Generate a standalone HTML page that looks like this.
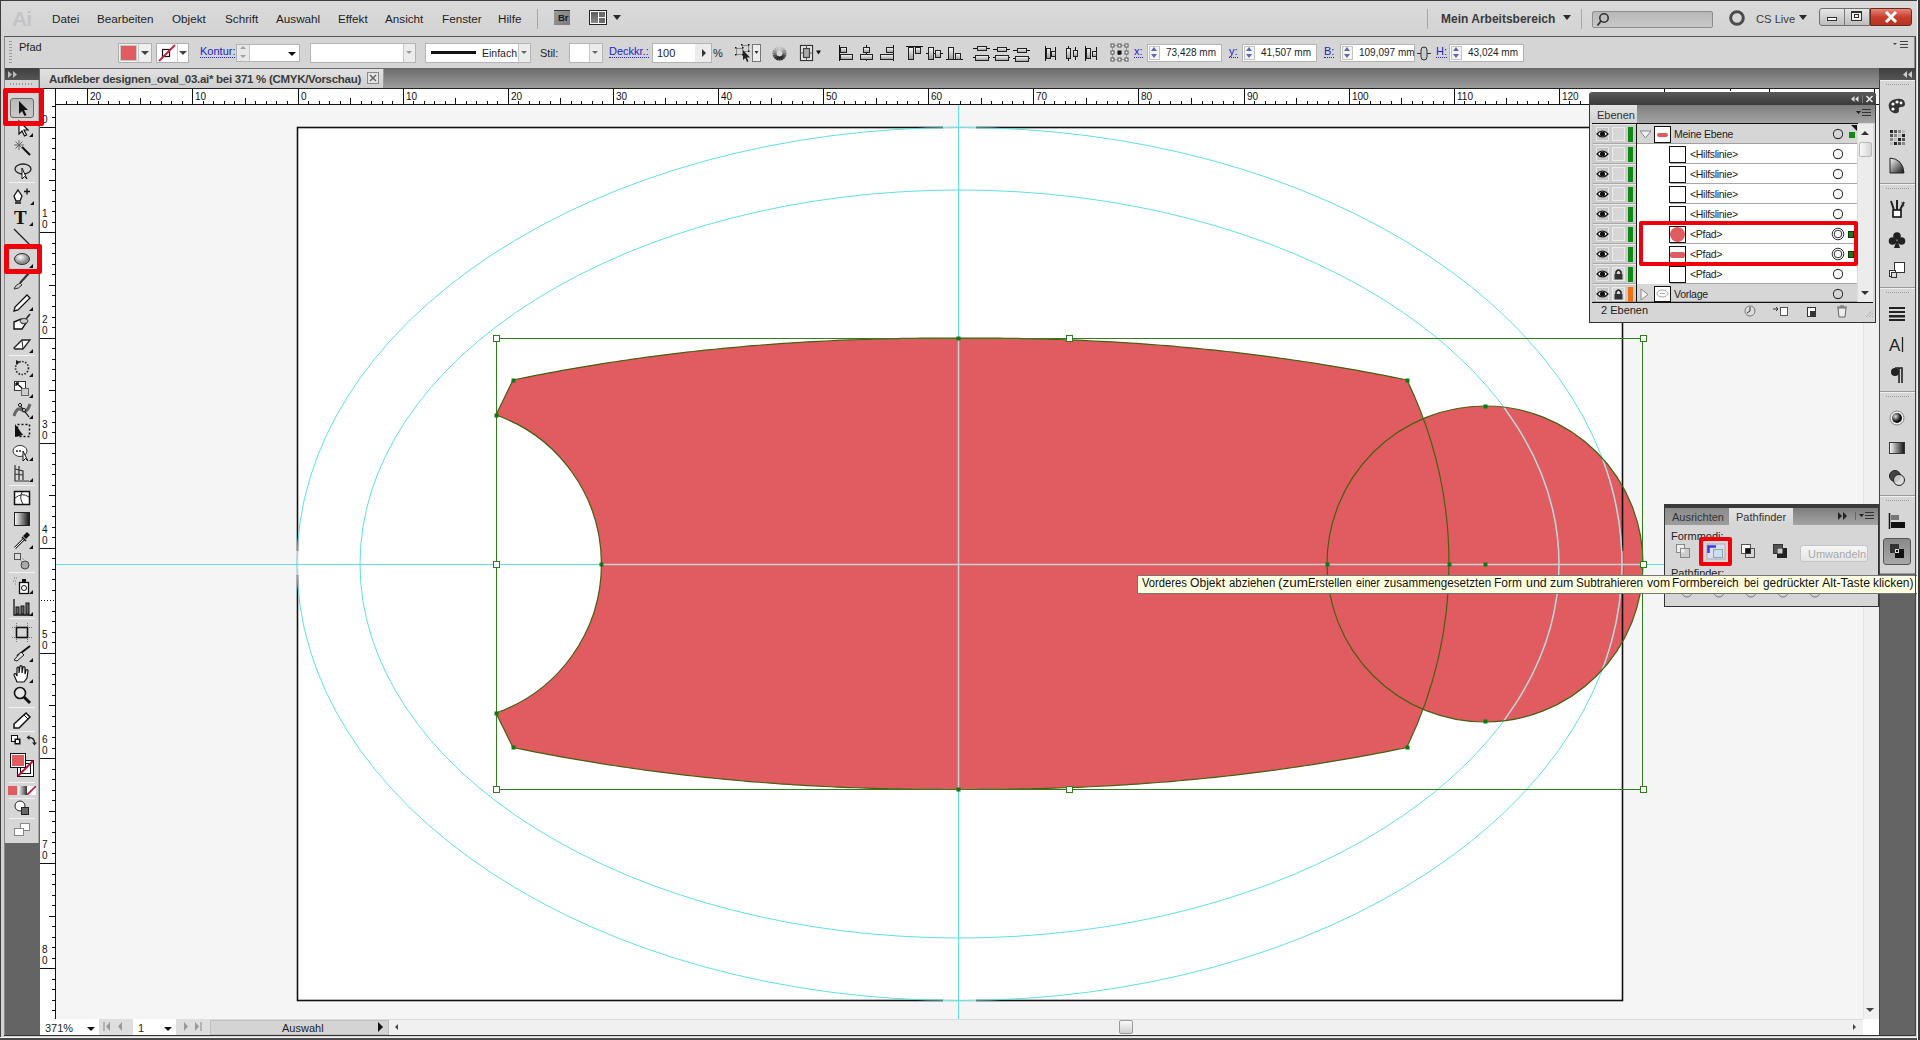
<!DOCTYPE html><html><head><meta charset="utf-8"><style>
*{box-sizing:border-box;margin:0;padding:0}
html,body{width:1920px;height:1040px;overflow:hidden;background:#d4d4d4;font-family:"Liberation Sans", sans-serif;}
.abs{position:absolute}
.t{position:absolute;white-space:nowrap;font-size:12px;color:#1e1e1e;line-height:14px}
</style></head><body>
<div class="abs" style="left:0;top:0;width:1920px;height:1040px;background:#d3d3d3;border-top:1px solid #3c3c3c;border-left:1px solid #3c3c3c"></div><div class="abs" style="left:1px;top:1px;width:1919px;height:35px;background:linear-gradient(#dadada,#d3d3d3)"></div><div class="t" style="left:12px;top:8px;font-size:21px;line-height:22px;font-weight:bold;color:#c4c4c4;letter-spacing:-1px">Ai</div><div class="t" style="left:52px;top:12px;font-size:11.7px">Datei</div><div class="t" style="left:97px;top:12px;font-size:11.7px">Bearbeiten</div><div class="t" style="left:172px;top:12px;font-size:11.7px">Objekt</div><div class="t" style="left:225px;top:12px;font-size:11.7px">Schrift</div><div class="t" style="left:276px;top:12px;font-size:11.7px">Auswahl</div><div class="t" style="left:338px;top:12px;font-size:11.7px">Effekt</div><div class="t" style="left:385px;top:12px;font-size:11.7px">Ansicht</div><div class="t" style="left:442px;top:12px;font-size:11.7px">Fenster</div><div class="t" style="left:498px;top:12px;font-size:11.7px">Hilfe</div><div class="abs" style="left:537px;top:9px;width:1px;height:20px;background:#a8a8a8"></div><div class="abs" style="left:554px;top:10px;width:16px;height:15px;background:linear-gradient(135deg,#9a9a9a,#7a7a7a);border-top:1px solid #333"></div><div class="t" style="left:558px;top:13px;font-size:9.5px;line-height:10px;color:#1a1a1a;font-weight:bold">Br</div><div class="abs" style="left:589px;top:10px;width:18px;height:15px;background:#fff;border:1px solid #222"></div><div class="abs" style="left:591px;top:12px;width:7px;height:11px;background:linear-gradient(#5a5a5a,#8a8a8a)"></div><div class="abs" style="left:599px;top:12px;width:6px;height:5px;background:#6a6a6a"></div><div class="abs" style="left:599px;top:18px;width:6px;height:5px;background:#6a6a6a"></div><div class="abs" style="left:613px;top:15px;width:0;height:0;border-left:4px solid transparent;border-right:4px solid transparent;border-top:5px solid #2a2a2a"></div><div class="abs" style="left:1427px;top:9px;width:1px;height:20px;background:#a8a8a8"></div><div class="t" style="left:1441px;top:12px;font-size:12px;font-weight:bold;color:#3a3a3a">Mein Arbeitsbereich</div><div class="abs" style="left:1563px;top:15px;width:0;height:0;border-left:4px solid transparent;border-right:4px solid transparent;border-top:5px solid #2a2a2a"></div><div class="abs" style="left:1581px;top:9px;width:1px;height:20px;background:#a8a8a8"></div><div class="abs" style="left:1592px;top:11px;width:121px;height:17px;background:linear-gradient(#b8b8b8,#c8c8c8);border:1px solid #8e8e8e;border-radius:2px"></div><svg class="abs" style="left:1596px;top:12px" width="14" height="15"><circle cx="8" cy="6" r="4.2" fill="none" stroke="#333" stroke-width="1.6"/><line x1="5" y1="9" x2="1.5" y2="13.5" stroke="#333" stroke-width="1.8"/></svg><svg class="abs" style="left:1728px;top:9px" width="18" height="18"><circle cx="9" cy="9" r="6.3" fill="none" stroke="#4a4a4a" stroke-width="3"/></svg><div class="t" style="left:1756px;top:12px;font-size:11.2px;color:#3a3a3a">CS Live</div><div class="abs" style="left:1799px;top:15px;width:0;height:0;border-left:4px solid transparent;border-right:4px solid transparent;border-top:5px solid #2a2a2a"></div><div class="abs" style="left:1819px;top:8px;width:51px;height:18px;background:linear-gradient(#e6e6e6,#bdbdbd);border:1px solid #6e6e6e;border-radius:3px 0 0 3px"></div><div class="abs" style="left:1844px;top:9px;width:1px;height:16px;background:#7a7a7a"></div><div class="abs" style="left:1827px;top:17px;width:10px;height:4px;border:1px solid #303030;background:#fff"></div><div class="abs" style="left:1851px;top:11px;width:11px;height:10px;border:1px solid #303030;border-top-width:2px;background:#eee"></div><div class="abs" style="left:1854px;top:14px;width:5px;height:4px;border:1px solid #303030"></div><div class="abs" style="left:1870px;top:8px;width:42px;height:18px;background:linear-gradient(#e8867a,#c6402f 50%,#b8331f);border:1px solid #6a2a20;border-radius:0 3px 3px 0"></div><svg class="abs" style="left:1884px;top:11px" width="14" height="12"><path d="M2 1 L12 11 M12 1 L2 11" stroke="#fff" stroke-width="3"/></svg><div class="abs" style="left:4px;top:36px;width:1911px;height:32px;background:#d5d5d5;border-top:1px solid #555;border-left:1px solid #8a8a8a;border-right:1px solid #8a8a8a"></div><div class="abs" style="left:9px;top:41px;width:3px;height:22px;background:repeating-linear-gradient(#9a9a9a 0 1px,transparent 1px 3px)"></div><div class="t" style="left:19px;top:40px;font-size:11px">Pfad</div><div class="abs" style="left:118px;top:43px;width:34px;height:20px;background:#efefef;border:1px solid #b0b0b0"></div><div class="abs" style="left:120px;top:45px;width:17px;height:16px;background:#e05c5e;border:1px solid #c9c9c9"></div><div class="abs" style="left:138px;top:44px;width:1px;height:18px;background:#c8c8c8"></div><div class="abs" style="left:141px;top:51px;width:0;height:0;border-left:4px solid transparent;border-right:4px solid transparent;border-top:4px solid #444"></div><div class="abs" style="left:156px;top:43px;width:33px;height:20px;background:#fff;border:1px solid #b0b0b0"></div><svg class="abs" style="left:157px;top:44px" width="20" height="18"><rect x="5.5" y="5.5" width="7" height="7" fill="none" stroke="#111" stroke-width="1.2"/><line x1="2" y1="17" x2="18" y2="1" stroke="#c02040" stroke-width="1.8"/></svg><div class="abs" style="left:177px;top:44px;width:1px;height:18px;background:#d0d0d0"></div><div class="abs" style="left:179px;top:51px;width:0;height:0;border-left:4px solid transparent;border-right:4px solid transparent;border-top:4px solid #444"></div><div class="t" style="left:200px;top:45px;font-size:11px;color:#2323c8;border-bottom:1px dotted #2323c8;line-height:12px">Kontur:</div><div class="abs" style="left:236px;top:44px;width:64px;height:18px;background:#fff;border:1px solid #b4b4b4"></div><div class="abs" style="left:237px;top:45px;width:13px;height:16px;background:#e8e8e8;border-right:1px solid #c8c8c8"></div><div class="abs" style="left:240px;top:46px;width:0;height:0;border-left:3px solid transparent;border-right:3px solid transparent;border-bottom:3px solid #a0a0a0"></div><div class="abs" style="left:240px;top:55px;width:0;height:0;border-left:3px solid transparent;border-right:3px solid transparent;border-top:3px solid #a0a0a0"></div><div class="abs" style="left:288px;top:52px;width:0;height:0;border-left:4px solid transparent;border-right:4px solid transparent;border-top:4px solid #111"></div><div class="abs" style="left:310px;top:43px;width:106px;height:20px;background:#fff;border:1px solid #b4b4b4"></div><div class="abs" style="left:403px;top:44px;width:12px;height:18px;background:#ececec;border-left:1px solid #c8c8c8"></div><div class="abs" style="left:406px;top:51px;width:0;height:0;border-left:3px solid transparent;border-right:3px solid transparent;border-top:3px solid #9a9a9a"></div><div class="abs" style="left:425px;top:43px;width:106px;height:20px;background:#fff;border:1px solid #b4b4b4"></div><div class="abs" style="left:431px;top:51px;width:45px;height:3px;background:#111"></div><div class="t" style="left:482px;top:46px;font-size:10.5px">Einfach</div><div class="abs" style="left:518px;top:44px;width:12px;height:18px;background:#ececec;border-left:1px solid #c8c8c8"></div><div class="abs" style="left:521px;top:51px;width:0;height:0;border-left:3px solid transparent;border-right:3px solid transparent;border-top:3px solid #666"></div><div class="t" style="left:540px;top:46px;font-size:11px">Stil:</div><div class="abs" style="left:569px;top:43px;width:34px;height:20px;background:#fff;border:1px solid #b4b4b4"></div><div class="abs" style="left:589px;top:44px;width:13px;height:18px;background:#ececec;border-left:1px solid #c8c8c8"></div><div class="abs" style="left:592px;top:51px;width:0;height:0;border-left:3px solid transparent;border-right:3px solid transparent;border-top:3px solid #666"></div><div class="t" style="left:609px;top:45px;font-size:11px;color:#2323c8;border-bottom:1px dotted #2323c8;line-height:12px">Deckkr.:</div><div class="abs" style="left:652px;top:43px;width:60px;height:20px;background:#fff;border:1px solid #b4b4b4"></div><div class="t" style="left:657px;top:46px;font-size:11px">100</div><div class="abs" style="left:695px;top:44px;width:16px;height:18px;background:#ececec"></div><div class="abs" style="left:702px;top:49px;width:0;height:0;border-top:4px solid transparent;border-bottom:4px solid transparent;border-left:4px solid #333"></div><div class="t" style="left:713px;top:46px;font-size:11px">%</div><svg class="abs" style="left:733px;top:43px" width="30" height="20"><rect x="3.5" y="5.5" width="6" height="6" fill="none" stroke="#888"/><rect x="9.5" y="2.5" width="6" height="6" fill="none" stroke="#888"/><g fill="#111"><rect x="2" y="4" width="1.5" height="1.5"/><rect x="9" y="4" width="1.5" height="1.5"/><rect x="2" y="11" width="1.5" height="1.5"/><rect x="9" y="11" width="1.5" height="1.5"/><rect x="8" y="1" width="1.5" height="1.5"/><rect x="15" y="1" width="1.5" height="1.5"/><rect x="15" y="7.5" width="1.5" height="1.5"/></g><path d="M10 7 L10 17 L12.3 15 L14 19 L15.5 18.3 L13.8 14.5 L17 14.5 Z" fill="#222"/><rect x="19.5" y="1.5" width="8" height="17" fill="#eee" stroke="#777"/><path d="M21.5 8 L25.5 8 L23.5 11 Z" fill="#333"/></svg><svg class="abs" style="left:771px;top:45px" width="17" height="17"><line x1="11.50" y1="8.50" x2="15.50" y2="8.50" stroke="rgb(115,115,115)" stroke-width="2.2"/><line x1="11.27" y1="9.65" x2="14.97" y2="11.18" stroke="rgb(82,82,82)" stroke-width="2.2"/><line x1="10.62" y1="10.62" x2="13.45" y2="13.45" stroke="rgb(54,54,54)" stroke-width="2.2"/><line x1="9.65" y1="11.27" x2="11.18" y2="14.97" stroke="rgb(36,36,36)" stroke-width="2.2"/><line x1="8.50" y1="11.50" x2="8.50" y2="15.50" stroke="rgb(30,30,30)" stroke-width="2.2"/><line x1="7.35" y1="11.27" x2="5.82" y2="14.97" stroke="rgb(36,36,36)" stroke-width="2.2"/><line x1="6.38" y1="10.62" x2="3.55" y2="13.45" stroke="rgb(54,54,54)" stroke-width="2.2"/><line x1="5.73" y1="9.65" x2="2.03" y2="11.18" stroke="rgb(82,82,82)" stroke-width="2.2"/><line x1="5.50" y1="8.50" x2="1.50" y2="8.50" stroke="rgb(114,114,114)" stroke-width="2.2"/><line x1="5.73" y1="7.35" x2="2.03" y2="5.82" stroke="rgb(147,147,147)" stroke-width="2.2"/><line x1="6.38" y1="6.38" x2="3.55" y2="3.55" stroke="rgb(175,175,175)" stroke-width="2.2"/><line x1="7.35" y1="5.73" x2="5.82" y2="2.03" stroke="rgb(193,193,193)" stroke-width="2.2"/><line x1="8.50" y1="5.50" x2="8.50" y2="1.50" stroke="rgb(200,200,200)" stroke-width="2.2"/><line x1="9.65" y1="5.73" x2="11.18" y2="2.03" stroke="rgb(193,193,193)" stroke-width="2.2"/><line x1="10.62" y1="6.38" x2="13.45" y2="3.55" stroke="rgb(175,175,175)" stroke-width="2.2"/><line x1="11.27" y1="7.35" x2="14.97" y2="5.82" stroke="rgb(147,147,147)" stroke-width="2.2"/></svg><svg class="abs" style="left:799px;top:44px" width="26" height="18"><rect x="1.5" y="1.5" width="12" height="15" fill="#f4f4f4" stroke="#333" stroke-width="1.2"/><path d="M1.5 9 L13.5 9 M7.5 1.5 L7.5 16.5" stroke="#555"/><rect x="4.5" y="4.5" width="6" height="9" fill="#aaa" stroke="#444" stroke-width="1.3"/><path d="M17 6.5 L22 6.5 L19.5 10.5 Z" fill="#111"/></svg><svg width="0" height="0" style="position:absolute"><defs><linearGradient id="ag" x1="0" y1="0" x2="0" y2="1"><stop offset="0" stop-color="#fafafa"/><stop offset="1" stop-color="#9a9a9a"/></linearGradient></defs></svg><svg class="abs" style="left:838px;top:44px" width="19" height="18"><line x1="1.5" y1="1" x2="1.5" y2="17" stroke="#111"/><rect x="2.5" y="3.5" width="6" height="5" fill="url(#ag)" stroke="#222"/><rect x="2.5" y="10.5" width="12" height="5" fill="url(#ag)" stroke="#222"/></svg><svg class="abs" style="left:858px;top:44px" width="19" height="18"><line x1="8.5" y1="1" x2="8.5" y2="17" stroke="#111"/><rect x="5.5" y="3.5" width="6" height="5" fill="url(#ag)" stroke="#222"/><rect x="2.5" y="10.5" width="12" height="5" fill="url(#ag)" stroke="#222"/></svg><svg class="abs" style="left:878px;top:44px" width="19" height="18"><line x1="15.5" y1="1" x2="15.5" y2="17" stroke="#111"/><rect x="8.5" y="3.5" width="7" height="5" fill="url(#ag)" stroke="#222"/><rect x="2.5" y="10.5" width="13" height="5" fill="url(#ag)" stroke="#222"/></svg><svg class="abs" style="left:905px;top:44px" width="19" height="18"><line x1="1" y1="2.5" x2="18" y2="2.5" stroke="#111"/><rect x="3.5" y="3.5" width="5" height="12" fill="url(#ag)" stroke="#222"/><rect x="10.5" y="3.5" width="5" height="6" fill="url(#ag)" stroke="#222"/></svg><svg class="abs" style="left:925px;top:44px" width="19" height="18"><line x1="1" y1="9.5" x2="18" y2="9.5" stroke="#111"/><rect x="3.5" y="3.5" width="5" height="12" fill="url(#ag)" stroke="#222"/><rect x="10.5" y="6.5" width="5" height="7" fill="url(#ag)" stroke="#222"/></svg><svg class="abs" style="left:945px;top:44px" width="19" height="18"><line x1="1" y1="15.5" x2="18" y2="15.5" stroke="#111"/><rect x="3.5" y="3.5" width="5" height="12" fill="url(#ag)" stroke="#222"/><rect x="10.5" y="9.5" width="5" height="6" fill="url(#ag)" stroke="#222"/></svg><svg class="abs" style="left:972px;top:44px" width="19" height="18"><line x1="1" y1="4.5" x2="18" y2="4.5" stroke="#111"/><line x1="1" y1="13.5" x2="18" y2="13.5" stroke="#111"/><rect x="5.5" y="2.5" width="9" height="4" fill="url(#ag)" stroke="#222"/><rect x="3.5" y="11.5" width="13" height="5" fill="url(#ag)" stroke="#222"/></svg><svg class="abs" style="left:992px;top:44px" width="19" height="18"><line x1="1" y1="5.5" x2="18" y2="5.5" stroke="#111"/><line x1="1" y1="13.5" x2="18" y2="13.5" stroke="#111"/><rect x="5.5" y="3.5" width="9" height="4" fill="url(#ag)" stroke="#222"/><rect x="3.5" y="11.5" width="13" height="5" fill="url(#ag)" stroke="#222"/></svg><svg class="abs" style="left:1012px;top:44px" width="19" height="18"><line x1="1" y1="6.5" x2="18" y2="6.5" stroke="#111"/><line x1="1" y1="14.5" x2="18" y2="14.5" stroke="#111"/><rect x="5.5" y="4.5" width="9" height="4" fill="url(#ag)" stroke="#222"/><rect x="3.5" y="12.5" width="13" height="5" fill="url(#ag)" stroke="#222"/></svg><svg class="abs" style="left:1043px;top:44px" width="19" height="18"><line x1="2.5" y1="2" x2="2.5" y2="17" stroke="#111"/><rect x="3.5" y="4.5" width="4" height="10" fill="url(#ag)" stroke="#222"/><line x1="12.5" y1="3" x2="12.5" y2="16" stroke="#111"/><rect x="8.5" y="7.5" width="4" height="5" fill="url(#ag)" stroke="#222"/></svg><svg class="abs" style="left:1063px;top:44px" width="19" height="18"><line x1="5.5" y1="2" x2="5.5" y2="17" stroke="#111"/><rect x="3.5" y="4.5" width="4" height="10" fill="url(#ag)" stroke="#222"/><line x1="12.5" y1="3" x2="12.5" y2="16" stroke="#111"/><rect x="10.5" y="6.5" width="4" height="6" fill="url(#ag)" stroke="#222"/></svg><svg class="abs" style="left:1083px;top:44px" width="19" height="18"><line x1="2.5" y1="2" x2="2.5" y2="17" stroke="#111"/><rect x="3.5" y="4.5" width="4" height="10" fill="url(#ag)" stroke="#222"/><line x1="13.5" y1="3" x2="13.5" y2="16" stroke="#111"/><rect x="9.5" y="7.5" width="4" height="5" fill="url(#ag)" stroke="#222"/></svg><svg class="abs" style="left:1110px;top:43px" width="20" height="20"><rect x="2.5" y="2.5" width="14" height="14" fill="none" stroke="#666" stroke-dasharray="1 1"/><path d="M8 9 L11 9 L11 11 L8 12 Z" fill="#111"/><rect x="1.0" y="1.0" width="3" height="3" fill="#fff" stroke="#555"/><rect x="8.0" y="1.0" width="3" height="3" fill="#fff" stroke="#555"/><rect x="15.0" y="1.0" width="3" height="3" fill="#fff" stroke="#555"/><rect x="1.0" y="8.0" width="3" height="3" fill="#fff" stroke="#555"/><rect x="7.5" y="7.5" width="4" height="4" fill="#111"/><rect x="15.0" y="8.0" width="3" height="3" fill="#fff" stroke="#555"/><rect x="1.0" y="15.0" width="3" height="3" fill="#fff" stroke="#555"/><rect x="8.0" y="15.0" width="3" height="3" fill="#fff" stroke="#555"/><rect x="15.0" y="15.0" width="3" height="3" fill="#fff" stroke="#555"/></svg><div class="t" style="left:1134px;top:45px;font-size:11px;color:#2323c8;border-bottom:1px dotted #2323c8;line-height:12px">x:</div><div class="abs" style="left:1147px;top:44px;width:75px;height:18px;background:#fff;border:1px solid #b4b4b4"></div><div class="abs" style="left:1149px;top:46px;width:11px;height:14px;border:1px solid #c4c4c4;background:#f4f4f4"></div><div class="abs" style="left:1151px;top:47px;width:0;height:0;border-left:3px solid transparent;border-right:3px solid transparent;border-bottom:4px solid #5a6ab0"></div><div class="abs" style="left:1151px;top:54px;width:0;height:0;border-left:3px solid transparent;border-right:3px solid transparent;border-top:4px solid #5a6ab0"></div><div class="t" style="left:1166px;top:46px;font-size:10px">73,428 mm</div><div class="t" style="left:1229px;top:45px;font-size:11px;color:#2323c8;border-bottom:1px dotted #2323c8;line-height:12px">y:</div><div class="abs" style="left:1242px;top:44px;width:75px;height:18px;background:#fff;border:1px solid #b4b4b4"></div><div class="abs" style="left:1244px;top:46px;width:11px;height:14px;border:1px solid #c4c4c4;background:#f4f4f4"></div><div class="abs" style="left:1246px;top:47px;width:0;height:0;border-left:3px solid transparent;border-right:3px solid transparent;border-bottom:4px solid #5a6ab0"></div><div class="abs" style="left:1246px;top:54px;width:0;height:0;border-left:3px solid transparent;border-right:3px solid transparent;border-top:4px solid #5a6ab0"></div><div class="t" style="left:1261px;top:46px;font-size:10px">41,507 mm</div><div class="t" style="left:1324px;top:45px;font-size:11px;color:#2323c8;border-bottom:1px dotted #2323c8;line-height:12px">B:</div><div class="abs" style="left:1340px;top:44px;width:75px;height:18px;background:#fff;border:1px solid #b4b4b4"></div><div class="abs" style="left:1342px;top:46px;width:11px;height:14px;border:1px solid #c4c4c4;background:#f4f4f4"></div><div class="abs" style="left:1344px;top:47px;width:0;height:0;border-left:3px solid transparent;border-right:3px solid transparent;border-bottom:4px solid #5a6ab0"></div><div class="abs" style="left:1344px;top:54px;width:0;height:0;border-left:3px solid transparent;border-right:3px solid transparent;border-top:4px solid #5a6ab0"></div><div class="t" style="left:1359px;top:46px;font-size:10px">109,097 mm</div><svg class="abs" style="left:1416px;top:44px" width="16" height="18"><line x1="1" y1="9.5" x2="15" y2="9.5" stroke="#333"/><rect x="5" y="3" width="6" height="13" rx="3" fill="#ccc" stroke="#333"/></svg><div class="t" style="left:1436px;top:45px;font-size:11px;color:#2323c8;border-bottom:1px dotted #2323c8;line-height:12px">H:</div><div class="abs" style="left:1449px;top:44px;width:75px;height:18px;background:#fff;border:1px solid #b4b4b4"></div><div class="abs" style="left:1451px;top:46px;width:11px;height:14px;border:1px solid #c4c4c4;background:#f4f4f4"></div><div class="abs" style="left:1453px;top:47px;width:0;height:0;border-left:3px solid transparent;border-right:3px solid transparent;border-bottom:4px solid #5a6ab0"></div><div class="abs" style="left:1453px;top:54px;width:0;height:0;border-left:3px solid transparent;border-right:3px solid transparent;border-top:4px solid #5a6ab0"></div><div class="t" style="left:1468px;top:46px;font-size:10px">43,024 mm</div><div class="abs" style="left:1900px;top:41px;width:8px;height:8px;background:repeating-linear-gradient(#444 0 1px,transparent 1px 3px)"></div><div class="abs" style="left:1893px;top:43px;width:0;height:0;border-left:2px solid transparent;border-right:2px solid transparent;border-top:2px solid #444"></div><div class="abs" style="left:40px;top:68px;width:1839px;height:20px;background:linear-gradient(#6a6a6a,#9c9c9c)"></div><div class="abs" style="left:40px;top:69px;width:344px;height:19px;background:linear-gradient(#e2e2e2,#cfcfcf);border-right:1px solid #9a9a9a"></div><div class="t" style="left:49px;top:72px;font-size:11.5px;font-weight:bold;color:#3c3c3c;letter-spacing:-0.28px">Aufkleber designen_oval_03.ai* bei 371 % (CMYK/Vorschau)</div><div class="abs" style="left:367px;top:72px;width:12px;height:12px;border:1px solid #8a8a8a;background:#e4e4e4"></div><svg class="abs" style="left:367px;top:72px" width="12" height="12"><path d="M3 3 L9 9 M9 3 L3 9" stroke="#666" stroke-width="1.5"/></svg><div class="abs" style="left:4px;top:68px;width:36px;height:968px;background:#646464;border-left:1px solid #8a8a8a"></div><div class="abs" style="left:5px;top:68px;width:34px;height:12px;background:linear-gradient(#3e3e3e,#555)"></div><svg class="abs" style="left:8px;top:71px" width="10" height="7"><path d="M0 0 L4 3.5 L0 7 Z M5 0 L9 3.5 L5 7 Z" fill="#bbb"/></svg><div class="abs" style="left:5px;top:80px;width:34px;height:763px;background:#d6d6d6;border-right:1px solid #a8a8a8"></div><div class="abs" style="left:10px;top:83px;width:24px;height:2px;background:repeating-linear-gradient(90deg,#9a9a9a 0 1px,transparent 1px 3px)"></div><div class="abs" style="left:10px;top:98px;width:24px;height:20px;border:1px solid #6a6a6a;border-radius:3px;background:linear-gradient(#b8b8b8,#cacaca)"></div><svg class="abs" style="left:11px;top:98px" width="22" height="20"><path d="M8 3 L8 16 L11 13 L13.5 18 L15.5 17 L13 12 L17 12 Z" fill="#111"/></svg><svg class="abs" style="left:11px;top:118px" width="22" height="20"><path d="M8 3 L8 16 L11 13 L13.5 18 L15.5 17 L13 12 L17 12 Z" fill="#fff" stroke="#111" stroke-width="1.2"/></svg><svg class="abs" style="left:29px;top:133px" width="4" height="4"><path d="M4 0 L4 4 L0 4 Z" fill="#111"/></svg><svg class="abs" style="left:11px;top:138px" width="22" height="20"><path d="M11 9 L19 17" stroke="#111" stroke-width="2"/><path d="M8 2 L8 12 M3 7 L13 7 M4.5 3.5 L11.5 10.5 M11.5 3.5 L4.5 10.5" stroke="#666" stroke-width="1"/></svg><svg class="abs" style="left:11px;top:160px" width="22" height="20"><ellipse cx="12" cy="9" rx="8" ry="5" fill="none" stroke="#222" stroke-width="1.3"/><path d="M11 8 L11 19 L13.5 16.5 L16 19 Z" fill="#fff" stroke="#111"/></svg><div class="abs" style="left:9px;top:182px;width:26px;height:1px;background:#b4b4b4;border-bottom:1px solid #f2f2f2"></div><svg class="abs" style="left:12px;top:186px" width="22" height="20"><path d="M6 4 L10 10 L8 15 L4 15 L2 10 Z" fill="#fff" stroke="#111" stroke-width="1.3"/><line x1="3" y1="17" x2="9" y2="17" stroke="#111" stroke-width="1.5"/><path d="M12 5.5 L18 5.5 M15 2.5 L15 8.5" stroke="#111" stroke-width="1.4"/></svg><svg class="abs" style="left:30px;top:201px" width="4" height="4"><path d="M4 0 L4 4 L0 4 Z" fill="#111"/></svg><svg class="abs" style="left:11px;top:207px" width="22" height="20"><text x="3" y="17" font-family="Liberation Serif" font-size="19" font-weight="bold" fill="#111">T</text></svg><svg class="abs" style="left:29px;top:222px" width="4" height="4"><path d="M4 0 L4 4 L0 4 Z" fill="#111"/></svg><svg class="abs" style="left:11px;top:227px" width="22" height="20"><line x1="3" y1="2" x2="19" y2="18" stroke="#222" stroke-width="1.3"/></svg><svg class="abs" style="left:11px;top:249px" width="22" height="20"><defs><radialGradient id="eg" cx="40%" cy="35%"><stop offset="0" stop-color="#fff"/><stop offset="1" stop-color="#8a8a8a"/></radialGradient></defs><ellipse cx="11" cy="10" rx="7.5" ry="5.5" fill="url(#eg)" stroke="#333"/></svg><svg class="abs" style="left:29px;top:264px" width="4" height="4"><path d="M4 0 L4 4 L0 4 Z" fill="#111"/></svg><svg class="abs" style="left:11px;top:271px" width="22" height="20"><path d="M18 2 L9 12" stroke="#333" stroke-width="2"/><path d="M9 12 Q4 14 3 18 Q8 18 11 14 Z" fill="#ccc" stroke="#333"/></svg><svg class="abs" style="left:11px;top:292px" width="22" height="20"><path d="M16 3 L19 6 L7 18 L3 19 L4 15 Z" fill="#fff" stroke="#111" stroke-width="1.3"/></svg><svg class="abs" style="left:29px;top:307px" width="4" height="4"><path d="M4 0 L4 4 L0 4 Z" fill="#111"/></svg><svg class="abs" style="left:11px;top:312px" width="22" height="20"><path d="M3 10 L10 7 L15 11 L11 17 L3 17 Z" fill="#fff" stroke="#111" stroke-width="1.4"/><path d="M19 2 L11 12" stroke="#333" stroke-width="1.8"/><ellipse cx="13" cy="9" rx="4" ry="2.5" fill="#ccc" stroke="#333"/></svg><svg class="abs" style="left:11px;top:334px" width="22" height="20"><path d="M3 14 L11 6 L19 6 L12 15 L4 15 Z" fill="#fff" stroke="#222" stroke-width="1.3"/><path d="M11 6 L12 15" stroke="#222"/></svg><svg class="abs" style="left:29px;top:349px" width="4" height="4"><path d="M4 0 L4 4 L0 4 Z" fill="#111"/></svg><div class="abs" style="left:9px;top:355px;width:26px;height:1px;background:#b4b4b4;border-bottom:1px solid #f2f2f2"></div><svg class="abs" style="left:11px;top:358px" width="22" height="20"><circle cx="11" cy="10" r="6.5" fill="none" stroke="#222" stroke-width="1.6" stroke-dasharray="1.5 1.5"/><path d="M5 2 L9 4 L5 7 Z" fill="#222"/></svg><svg class="abs" style="left:29px;top:373px" width="4" height="4"><path d="M4 0 L4 4 L0 4 Z" fill="#111"/></svg><svg class="abs" style="left:11px;top:379px" width="22" height="20"><rect x="3.5" y="2.5" width="11" height="9" fill="#fff" stroke="#333"/><rect x="10.5" y="9.5" width="7" height="7" fill="#ccc" stroke="#666"/><path d="M5 4 L11 9 M5 4 L8 4 M5 4 L5 7" stroke="#111" stroke-width="1.3"/></svg><svg class="abs" style="left:29px;top:394px" width="4" height="4"><path d="M4 0 L4 4 L0 4 Z" fill="#111"/></svg><svg class="abs" style="left:11px;top:400px" width="22" height="20"><path d="M3 16 Q6 6 11 10 Q16 14 19 4" fill="none" stroke="#666" stroke-width="3"/><path d="M8 4 L18 17" stroke="#111" stroke-width="1.2"/><circle cx="9" cy="5" r="1.5" fill="#fff" stroke="#111"/><circle cx="13" cy="10" r="1.5" fill="#fff" stroke="#111"/></svg><svg class="abs" style="left:29px;top:415px" width="4" height="4"><path d="M4 0 L4 4 L0 4 Z" fill="#111"/></svg><svg class="abs" style="left:11px;top:421px" width="22" height="20"><rect x="6.5" y="3.5" width="12" height="12" fill="none" stroke="#111" stroke-width="1.5" stroke-dasharray="2 2"/><path d="M4 3 L4 16 L12 14 Z" fill="#111"/></svg><svg class="abs" style="left:11px;top:442px" width="22" height="20"><ellipse cx="9" cy="9" rx="7" ry="5.5" fill="#fff" stroke="#333"/><circle cx="6" cy="9" r="1" fill="#222"/><circle cx="9" cy="9" r="1" fill="#222"/><path d="M12 9 L12 19 L14.5 16.5 L17 19 Z" fill="#fff" stroke="#111"/></svg><svg class="abs" style="left:29px;top:457px" width="4" height="4"><path d="M4 0 L4 4 L0 4 Z" fill="#111"/></svg><svg class="abs" style="left:11px;top:463px" width="22" height="20"><path d="M4 2 L4 18 L18 18 M4 6 L12 8 L12 17 M8 3 L8 17 M4 11 L12 12" fill="none" stroke="#333" stroke-width="1.2"/></svg><svg class="abs" style="left:29px;top:478px" width="4" height="4"><path d="M4 0 L4 4 L0 4 Z" fill="#111"/></svg><div class="abs" style="left:9px;top:485px;width:26px;height:1px;background:#b4b4b4;border-bottom:1px solid #f2f2f2"></div><svg class="abs" style="left:11px;top:488px" width="22" height="20"><rect x="3.5" y="3.5" width="15" height="13" fill="#fff" stroke="#111" stroke-width="1.5"/><path d="M4 10 Q11 4 18 9 M11 4 Q8 10 12 16" fill="none" stroke="#333"/></svg><svg class="abs" style="left:11px;top:509px" width="22" height="20"><defs><linearGradient id="gg"><stop offset="0" stop-color="#fff"/><stop offset="1" stop-color="#111"/></linearGradient></defs><rect x="3.5" y="3.5" width="15" height="13" fill="url(#gg)" stroke="#222"/></svg><svg class="abs" style="left:11px;top:530px" width="22" height="20"><path d="M4 18 L13 9" stroke="#333" stroke-width="2.5"/><path d="M4 18 L13 9" stroke="#fff" stroke-width="1"/><path d="M12 6 L16 2 L19 5 L15 9 Z" fill="#111"/><path d="M11 7 L15 11" stroke="#111" stroke-width="1.5"/></svg><svg class="abs" style="left:29px;top:545px" width="4" height="4"><path d="M4 0 L4 4 L0 4 Z" fill="#111"/></svg><svg class="abs" style="left:11px;top:551px" width="22" height="20"><rect x="3.5" y="2.5" width="6" height="6" fill="#ddd" stroke="#555"/><circle cx="14" cy="14" r="4" fill="#aaa" stroke="#444"/><path d="M9 9 L11 11 M11 7 L13 9" stroke="#888" stroke-dasharray="1 1"/></svg><div class="abs" style="left:9px;top:572px;width:26px;height:1px;background:#b4b4b4;border-bottom:1px solid #f2f2f2"></div><svg class="abs" style="left:11px;top:575px" width="22" height="20"><rect x="8.5" y="7.5" width="9" height="11" fill="#fff" stroke="#111" stroke-width="1.3"/><circle cx="13" cy="13" r="2.5" fill="none" stroke="#111"/><rect x="11" y="4" width="4" height="3" fill="#111"/><path d="M3 3 L6 3 M2 6 L6 6 M4 9 L6 9" stroke="#777" stroke-dasharray="1 1"/></svg><svg class="abs" style="left:29px;top:590px" width="4" height="4"><path d="M4 0 L4 4 L0 4 Z" fill="#111"/></svg><svg class="abs" style="left:11px;top:597px" width="22" height="20"><path d="M3 2 L3 18 L19 18" stroke="#111" fill="none" stroke-width="1.3"/><rect x="5" y="10" width="3" height="7" fill="#666" stroke="#111"/><rect x="10" y="9" width="3" height="8" fill="#666" stroke="#111"/><rect x="15" y="6" width="3" height="11" fill="#666" stroke="#111"/></svg><svg class="abs" style="left:29px;top:612px" width="4" height="4"><path d="M4 0 L4 4 L0 4 Z" fill="#111"/></svg><div class="abs" style="left:9px;top:618px;width:26px;height:1px;background:#b4b4b4;border-bottom:1px solid #f2f2f2"></div><svg class="abs" style="left:11px;top:622px" width="22" height="20"><rect x="5.5" y="5.5" width="11" height="10" fill="none" stroke="#111" stroke-width="1.6"/><path d="M1 5.5 L4 5.5 M18 5.5 L21 5.5 M1 15.5 L4 15.5 M18 15.5 L21 15.5 M5.5 1 L5.5 4 M16.5 1 L16.5 4 M5.5 17 L5.5 20 M16.5 17 L16.5 20" stroke="#777" stroke-dasharray="1 1"/></svg><svg class="abs" style="left:11px;top:643px" width="22" height="20"><path d="M19 3 L6 13" stroke="#111" stroke-width="2"/><path d="M10 9 L3 17 L6 18 L13 12 Z" fill="#ddd" stroke="#222"/></svg><svg class="abs" style="left:29px;top:658px" width="4" height="4"><path d="M4 0 L4 4 L0 4 Z" fill="#111"/></svg><svg class="abs" style="left:11px;top:664px" width="22" height="20"><path d="M6 18 L3 11 Q3 9 5 10 L6 12 L6 4 Q7 2 8 4 L8 9 L9 2 Q10.5 1 11 3 L11 9 L12 3 Q13.5 2 14 4 L14 10 L15 6 Q17 5 17 7 L16 14 L13 18 Z" fill="#fff" stroke="#111" stroke-width="1.2"/></svg><svg class="abs" style="left:29px;top:679px" width="4" height="4"><path d="M4 0 L4 4 L0 4 Z" fill="#111"/></svg><svg class="abs" style="left:11px;top:685px" width="22" height="20"><circle cx="9" cy="8" r="5.5" fill="#e8e8e8" stroke="#111" stroke-width="1.6"/><path d="M13 12 L19 18" stroke="#111" stroke-width="3"/></svg><div class="abs" style="left:9px;top:707px;width:26px;height:1px;background:#b4b4b4;border-bottom:1px solid #f2f2f2"></div><svg class="abs" style="left:11px;top:710px" width="22" height="20"><path d="M15 3 L19 7 L8 18 L3 18 L3 14 Z" fill="#fff" stroke="#111" stroke-width="1.5"/><path d="M13 5 L17 9" stroke="#111"/></svg><div class="abs" style="left:9px;top:731px;width:26px;height:1px;background:#b4b4b4;border-bottom:1px solid #f2f2f2"></div><svg class="abs" style="left:10px;top:734px" width="28" height="14"><rect x="1.5" y="1.5" width="6" height="6" fill="#fff" stroke="#111"/><rect x="4.5" y="4.5" width="6" height="6" fill="#111"/><rect x="6" y="6" width="3" height="3" fill="#fff"/><path d="M19 3.5 Q24.5 3.5 24.5 9" fill="none" stroke="#222" stroke-width="1.3"/><path d="M16.5 3.5 L19.5 1 L19.5 6 Z M24.5 11.5 L22 8.5 L27 8.5 Z" fill="#222"/></svg><div class="abs" style="left:17px;top:760px;width:17px;height:17px;background:#fff;border:1.5px solid #111"></div><div class="abs" style="left:20px;top:763px;width:11px;height:11px;border:1px solid #111"></div><svg class="abs" style="left:17px;top:760px" width="17" height="17"><line x1="1" y1="16" x2="16" y2="1" stroke="#c0143c" stroke-width="2"/></svg><div class="abs" style="left:10px;top:753px;width:16px;height:15px;background:#e05c5e;border:1.5px solid #111;box-shadow:0 0 0 1px #fff inset"></div><div class="abs" style="left:9px;top:782px;width:26px;height:1px;background:#b4b4b4;border-bottom:1px solid #f2f2f2"></div><div class="abs" style="left:8px;top:786px;width:9px;height:9px;background:#e05c5e"></div><div class="abs" style="left:18px;top:786px;width:9px;height:9px;background:linear-gradient(90deg,#fff,#333)"></div><svg class="abs" style="left:27px;top:786px" width="9" height="9"><rect width="9" height="9" fill="#fff"/><line x1="0" y1="9" x2="9" y2="0" stroke="#c0143c" stroke-width="1.6"/></svg><div class="abs" style="left:9px;top:798px;width:26px;height:1px;background:#b4b4b4;border-bottom:1px solid #f2f2f2"></div><svg class="abs" style="left:11px;top:798px" width="22" height="20"><circle cx="9" cy="8" r="5" fill="#fff" stroke="#222"/><rect x="10.5" y="9.5" width="7" height="7" fill="#666" stroke="#222"/></svg><div class="abs" style="left:9px;top:818px;width:26px;height:1px;background:#b4b4b4;border-bottom:1px solid #f2f2f2"></div><svg class="abs" style="left:11px;top:820px" width="22" height="20"><rect x="9.5" y="3.5" width="9" height="7" fill="#fff" stroke="#888"/><rect x="3.5" y="8.5" width="9" height="7" fill="#fff" stroke="#888"/></svg><div class="abs" style="left:40px;top:88px;width:1839px;height:17px;background:#fff;border-top:1px solid #222;border-bottom:1px solid #111"></div><div class="abs" style="left:40px;top:104px;width:16px;height:915px;background:#fff;border-right:1px solid #111"></div><div class="abs" style="left:55px;top:88px;width:1px;height:17px;background:#111"></div><svg class="abs" style="left:0;top:0" width="1920" height="1040"><g stroke="#111" stroke-width="1" shape-rendering="crispEdges"><line x1="66.5" y1="101" x2="66.5" y2="104"/><line x1="77.5" y1="101" x2="77.5" y2="104"/><line x1="87.5" y1="89" x2="87.5" y2="104"/><line x1="98.5" y1="101" x2="98.5" y2="104"/><line x1="108.5" y1="101" x2="108.5" y2="104"/><line x1="119.5" y1="101" x2="119.5" y2="104"/><line x1="129.5" y1="101" x2="129.5" y2="104"/><line x1="140.5" y1="98" x2="140.5" y2="104"/><line x1="150.5" y1="101" x2="150.5" y2="104"/><line x1="161.5" y1="101" x2="161.5" y2="104"/><line x1="171.5" y1="101" x2="171.5" y2="104"/><line x1="182.5" y1="101" x2="182.5" y2="104"/><line x1="192.5" y1="89" x2="192.5" y2="104"/><line x1="203.5" y1="101" x2="203.5" y2="104"/><line x1="213.5" y1="101" x2="213.5" y2="104"/><line x1="224.5" y1="101" x2="224.5" y2="104"/><line x1="234.5" y1="101" x2="234.5" y2="104"/><line x1="245.5" y1="98" x2="245.5" y2="104"/><line x1="255.5" y1="101" x2="255.5" y2="104"/><line x1="266.5" y1="101" x2="266.5" y2="104"/><line x1="276.5" y1="101" x2="276.5" y2="104"/><line x1="287.5" y1="101" x2="287.5" y2="104"/><line x1="298.5" y1="89" x2="298.5" y2="104"/><line x1="308.5" y1="101" x2="308.5" y2="104"/><line x1="319.5" y1="101" x2="319.5" y2="104"/><line x1="329.5" y1="101" x2="329.5" y2="104"/><line x1="340.5" y1="101" x2="340.5" y2="104"/><line x1="350.5" y1="98" x2="350.5" y2="104"/><line x1="361.5" y1="101" x2="361.5" y2="104"/><line x1="371.5" y1="101" x2="371.5" y2="104"/><line x1="382.5" y1="101" x2="382.5" y2="104"/><line x1="392.5" y1="101" x2="392.5" y2="104"/><line x1="403.5" y1="89" x2="403.5" y2="104"/><line x1="413.5" y1="101" x2="413.5" y2="104"/><line x1="424.5" y1="101" x2="424.5" y2="104"/><line x1="434.5" y1="101" x2="434.5" y2="104"/><line x1="445.5" y1="101" x2="445.5" y2="104"/><line x1="455.5" y1="98" x2="455.5" y2="104"/><line x1="466.5" y1="101" x2="466.5" y2="104"/><line x1="476.5" y1="101" x2="476.5" y2="104"/><line x1="487.5" y1="101" x2="487.5" y2="104"/><line x1="497.5" y1="101" x2="497.5" y2="104"/><line x1="508.5" y1="89" x2="508.5" y2="104"/><line x1="518.5" y1="101" x2="518.5" y2="104"/><line x1="529.5" y1="101" x2="529.5" y2="104"/><line x1="539.5" y1="101" x2="539.5" y2="104"/><line x1="550.5" y1="101" x2="550.5" y2="104"/><line x1="560.5" y1="98" x2="560.5" y2="104"/><line x1="571.5" y1="101" x2="571.5" y2="104"/><line x1="581.5" y1="101" x2="581.5" y2="104"/><line x1="592.5" y1="101" x2="592.5" y2="104"/><line x1="602.5" y1="101" x2="602.5" y2="104"/><line x1="613.5" y1="89" x2="613.5" y2="104"/><line x1="623.5" y1="101" x2="623.5" y2="104"/><line x1="634.5" y1="101" x2="634.5" y2="104"/><line x1="644.5" y1="101" x2="644.5" y2="104"/><line x1="655.5" y1="101" x2="655.5" y2="104"/><line x1="665.5" y1="98" x2="665.5" y2="104"/><line x1="676.5" y1="101" x2="676.5" y2="104"/><line x1="686.5" y1="101" x2="686.5" y2="104"/><line x1="697.5" y1="101" x2="697.5" y2="104"/><line x1="707.5" y1="101" x2="707.5" y2="104"/><line x1="718.5" y1="89" x2="718.5" y2="104"/><line x1="728.5" y1="101" x2="728.5" y2="104"/><line x1="739.5" y1="101" x2="739.5" y2="104"/><line x1="750.5" y1="101" x2="750.5" y2="104"/><line x1="760.5" y1="101" x2="760.5" y2="104"/><line x1="771.5" y1="98" x2="771.5" y2="104"/><line x1="781.5" y1="101" x2="781.5" y2="104"/><line x1="792.5" y1="101" x2="792.5" y2="104"/><line x1="802.5" y1="101" x2="802.5" y2="104"/><line x1="813.5" y1="101" x2="813.5" y2="104"/><line x1="823.5" y1="89" x2="823.5" y2="104"/><line x1="834.5" y1="101" x2="834.5" y2="104"/><line x1="844.5" y1="101" x2="844.5" y2="104"/><line x1="855.5" y1="101" x2="855.5" y2="104"/><line x1="865.5" y1="101" x2="865.5" y2="104"/><line x1="876.5" y1="98" x2="876.5" y2="104"/><line x1="886.5" y1="101" x2="886.5" y2="104"/><line x1="897.5" y1="101" x2="897.5" y2="104"/><line x1="907.5" y1="101" x2="907.5" y2="104"/><line x1="918.5" y1="101" x2="918.5" y2="104"/><line x1="928.5" y1="89" x2="928.5" y2="104"/><line x1="939.5" y1="101" x2="939.5" y2="104"/><line x1="949.5" y1="101" x2="949.5" y2="104"/><line x1="960.5" y1="101" x2="960.5" y2="104"/><line x1="970.5" y1="101" x2="970.5" y2="104"/><line x1="981.5" y1="98" x2="981.5" y2="104"/><line x1="991.5" y1="101" x2="991.5" y2="104"/><line x1="1002.5" y1="101" x2="1002.5" y2="104"/><line x1="1012.5" y1="101" x2="1012.5" y2="104"/><line x1="1023.5" y1="101" x2="1023.5" y2="104"/><line x1="1033.5" y1="89" x2="1033.5" y2="104"/><line x1="1044.5" y1="101" x2="1044.5" y2="104"/><line x1="1054.5" y1="101" x2="1054.5" y2="104"/><line x1="1065.5" y1="101" x2="1065.5" y2="104"/><line x1="1075.5" y1="101" x2="1075.5" y2="104"/><line x1="1086.5" y1="98" x2="1086.5" y2="104"/><line x1="1096.5" y1="101" x2="1096.5" y2="104"/><line x1="1107.5" y1="101" x2="1107.5" y2="104"/><line x1="1117.5" y1="101" x2="1117.5" y2="104"/><line x1="1128.5" y1="101" x2="1128.5" y2="104"/><line x1="1138.5" y1="89" x2="1138.5" y2="104"/><line x1="1149.5" y1="101" x2="1149.5" y2="104"/><line x1="1159.5" y1="101" x2="1159.5" y2="104"/><line x1="1170.5" y1="101" x2="1170.5" y2="104"/><line x1="1181.5" y1="101" x2="1181.5" y2="104"/><line x1="1191.5" y1="98" x2="1191.5" y2="104"/><line x1="1202.5" y1="101" x2="1202.5" y2="104"/><line x1="1212.5" y1="101" x2="1212.5" y2="104"/><line x1="1223.5" y1="101" x2="1223.5" y2="104"/><line x1="1233.5" y1="101" x2="1233.5" y2="104"/><line x1="1244.5" y1="89" x2="1244.5" y2="104"/><line x1="1254.5" y1="101" x2="1254.5" y2="104"/><line x1="1265.5" y1="101" x2="1265.5" y2="104"/><line x1="1275.5" y1="101" x2="1275.5" y2="104"/><line x1="1286.5" y1="101" x2="1286.5" y2="104"/><line x1="1296.5" y1="98" x2="1296.5" y2="104"/><line x1="1307.5" y1="101" x2="1307.5" y2="104"/><line x1="1317.5" y1="101" x2="1317.5" y2="104"/><line x1="1328.5" y1="101" x2="1328.5" y2="104"/><line x1="1338.5" y1="101" x2="1338.5" y2="104"/><line x1="1349.5" y1="89" x2="1349.5" y2="104"/><line x1="1359.5" y1="101" x2="1359.5" y2="104"/><line x1="1370.5" y1="101" x2="1370.5" y2="104"/><line x1="1380.5" y1="101" x2="1380.5" y2="104"/><line x1="1391.5" y1="101" x2="1391.5" y2="104"/><line x1="1401.5" y1="98" x2="1401.5" y2="104"/><line x1="1412.5" y1="101" x2="1412.5" y2="104"/><line x1="1422.5" y1="101" x2="1422.5" y2="104"/><line x1="1433.5" y1="101" x2="1433.5" y2="104"/><line x1="1443.5" y1="101" x2="1443.5" y2="104"/><line x1="1454.5" y1="89" x2="1454.5" y2="104"/><line x1="1464.5" y1="101" x2="1464.5" y2="104"/><line x1="1475.5" y1="101" x2="1475.5" y2="104"/><line x1="1485.5" y1="101" x2="1485.5" y2="104"/><line x1="1496.5" y1="101" x2="1496.5" y2="104"/><line x1="1506.5" y1="98" x2="1506.5" y2="104"/><line x1="1517.5" y1="101" x2="1517.5" y2="104"/><line x1="1527.5" y1="101" x2="1527.5" y2="104"/><line x1="1538.5" y1="101" x2="1538.5" y2="104"/><line x1="1548.5" y1="101" x2="1548.5" y2="104"/><line x1="1559.5" y1="89" x2="1559.5" y2="104"/><line x1="1569.5" y1="101" x2="1569.5" y2="104"/><line x1="1580.5" y1="101" x2="1580.5" y2="104"/><line x1="1590.5" y1="101" x2="1590.5" y2="104"/><line x1="1601.5" y1="101" x2="1601.5" y2="104"/><line x1="1612.5" y1="98" x2="1612.5" y2="104"/><line x1="1622.5" y1="101" x2="1622.5" y2="104"/><line x1="1633.5" y1="101" x2="1633.5" y2="104"/><line x1="1643.5" y1="101" x2="1643.5" y2="104"/><line x1="1654.5" y1="101" x2="1654.5" y2="104"/><line x1="1664.5" y1="89" x2="1664.5" y2="104"/><line x1="1675.5" y1="101" x2="1675.5" y2="104"/><line x1="1685.5" y1="101" x2="1685.5" y2="104"/><line x1="1696.5" y1="101" x2="1696.5" y2="104"/><line x1="1706.5" y1="101" x2="1706.5" y2="104"/><line x1="1717.5" y1="98" x2="1717.5" y2="104"/><line x1="1727.5" y1="101" x2="1727.5" y2="104"/><line x1="1738.5" y1="101" x2="1738.5" y2="104"/><line x1="1748.5" y1="101" x2="1748.5" y2="104"/><line x1="1759.5" y1="101" x2="1759.5" y2="104"/><line x1="1769.5" y1="89" x2="1769.5" y2="104"/><line x1="1780.5" y1="101" x2="1780.5" y2="104"/><line x1="1790.5" y1="101" x2="1790.5" y2="104"/><line x1="1801.5" y1="101" x2="1801.5" y2="104"/><line x1="1811.5" y1="101" x2="1811.5" y2="104"/><line x1="1822.5" y1="98" x2="1822.5" y2="104"/><line x1="1832.5" y1="101" x2="1832.5" y2="104"/><line x1="1843.5" y1="101" x2="1843.5" y2="104"/><line x1="1853.5" y1="101" x2="1853.5" y2="104"/><line x1="1864.5" y1="101" x2="1864.5" y2="104"/><line x1="1874.5" y1="89" x2="1874.5" y2="104"/><line x1="52" y1="106.5" x2="55" y2="106.5"/><line x1="52" y1="117.5" x2="55" y2="117.5"/><line x1="40" y1="127.5" x2="55" y2="127.5"/><line x1="52" y1="138.5" x2="55" y2="138.5"/><line x1="52" y1="148.5" x2="55" y2="148.5"/><line x1="52" y1="159.5" x2="55" y2="159.5"/><line x1="52" y1="169.5" x2="55" y2="169.5"/><line x1="49" y1="180.5" x2="55" y2="180.5"/><line x1="52" y1="190.5" x2="55" y2="190.5"/><line x1="52" y1="201.5" x2="55" y2="201.5"/><line x1="52" y1="211.5" x2="55" y2="211.5"/><line x1="52" y1="222.5" x2="55" y2="222.5"/><line x1="40" y1="232.5" x2="55" y2="232.5"/><line x1="52" y1="243.5" x2="55" y2="243.5"/><line x1="52" y1="253.5" x2="55" y2="253.5"/><line x1="52" y1="264.5" x2="55" y2="264.5"/><line x1="52" y1="274.5" x2="55" y2="274.5"/><line x1="49" y1="285.5" x2="55" y2="285.5"/><line x1="52" y1="295.5" x2="55" y2="295.5"/><line x1="52" y1="306.5" x2="55" y2="306.5"/><line x1="52" y1="317.5" x2="55" y2="317.5"/><line x1="52" y1="327.5" x2="55" y2="327.5"/><line x1="40" y1="338.5" x2="55" y2="338.5"/><line x1="52" y1="348.5" x2="55" y2="348.5"/><line x1="52" y1="359.5" x2="55" y2="359.5"/><line x1="52" y1="369.5" x2="55" y2="369.5"/><line x1="52" y1="380.5" x2="55" y2="380.5"/><line x1="49" y1="390.5" x2="55" y2="390.5"/><line x1="52" y1="401.5" x2="55" y2="401.5"/><line x1="52" y1="411.5" x2="55" y2="411.5"/><line x1="52" y1="422.5" x2="55" y2="422.5"/><line x1="52" y1="432.5" x2="55" y2="432.5"/><line x1="40" y1="443.5" x2="55" y2="443.5"/><line x1="52" y1="453.5" x2="55" y2="453.5"/><line x1="52" y1="464.5" x2="55" y2="464.5"/><line x1="52" y1="474.5" x2="55" y2="474.5"/><line x1="52" y1="485.5" x2="55" y2="485.5"/><line x1="49" y1="495.5" x2="55" y2="495.5"/><line x1="52" y1="506.5" x2="55" y2="506.5"/><line x1="52" y1="516.5" x2="55" y2="516.5"/><line x1="52" y1="527.5" x2="55" y2="527.5"/><line x1="52" y1="537.5" x2="55" y2="537.5"/><line x1="40" y1="548.5" x2="55" y2="548.5"/><line x1="52" y1="558.5" x2="55" y2="558.5"/><line x1="52" y1="569.5" x2="55" y2="569.5"/><line x1="52" y1="579.5" x2="55" y2="579.5"/><line x1="52" y1="590.5" x2="55" y2="590.5"/><line x1="52" y1="611.5" x2="55" y2="611.5"/><line x1="52" y1="621.5" x2="55" y2="621.5"/><line x1="52" y1="632.5" x2="55" y2="632.5"/><line x1="52" y1="642.5" x2="55" y2="642.5"/><line x1="40" y1="653.5" x2="55" y2="653.5"/><line x1="52" y1="663.5" x2="55" y2="663.5"/><line x1="52" y1="674.5" x2="55" y2="674.5"/><line x1="52" y1="684.5" x2="55" y2="684.5"/><line x1="52" y1="695.5" x2="55" y2="695.5"/><line x1="49" y1="705.5" x2="55" y2="705.5"/><line x1="52" y1="716.5" x2="55" y2="716.5"/><line x1="52" y1="726.5" x2="55" y2="726.5"/><line x1="52" y1="737.5" x2="55" y2="737.5"/><line x1="52" y1="748.5" x2="55" y2="748.5"/><line x1="40" y1="758.5" x2="55" y2="758.5"/><line x1="52" y1="769.5" x2="55" y2="769.5"/><line x1="52" y1="779.5" x2="55" y2="779.5"/><line x1="52" y1="790.5" x2="55" y2="790.5"/><line x1="52" y1="800.5" x2="55" y2="800.5"/><line x1="49" y1="811.5" x2="55" y2="811.5"/><line x1="52" y1="821.5" x2="55" y2="821.5"/><line x1="52" y1="832.5" x2="55" y2="832.5"/><line x1="52" y1="842.5" x2="55" y2="842.5"/><line x1="52" y1="853.5" x2="55" y2="853.5"/><line x1="40" y1="863.5" x2="55" y2="863.5"/><line x1="52" y1="874.5" x2="55" y2="874.5"/><line x1="52" y1="884.5" x2="55" y2="884.5"/><line x1="52" y1="895.5" x2="55" y2="895.5"/><line x1="52" y1="905.5" x2="55" y2="905.5"/><line x1="49" y1="916.5" x2="55" y2="916.5"/><line x1="52" y1="926.5" x2="55" y2="926.5"/><line x1="52" y1="937.5" x2="55" y2="937.5"/><line x1="52" y1="947.5" x2="55" y2="947.5"/><line x1="52" y1="958.5" x2="55" y2="958.5"/><line x1="40" y1="968.5" x2="55" y2="968.5"/><line x1="52" y1="979.5" x2="55" y2="979.5"/><line x1="52" y1="989.5" x2="55" y2="989.5"/><line x1="52" y1="1000.5" x2="55" y2="1000.5"/><line x1="52" y1="1010.5" x2="55" y2="1010.5"/></g><g font-family="Liberation Sans" font-size="10" fill="#111"><text x="90" y="100">20</text><text x="195" y="100">10</text><text x="301" y="100">0</text><text x="406" y="100">10</text><text x="511" y="100">20</text><text x="616" y="100">30</text><text x="721" y="100">40</text><text x="826" y="100">50</text><text x="931" y="100">60</text><text x="1036" y="100">70</text><text x="1141" y="100">80</text><text x="1247" y="100">90</text><text x="1352" y="100">100</text><text x="1457" y="100">110</text><text x="1562" y="100">120</text><text x="1667" y="100">130</text><text x="1772" y="100">140</text><text x="42" y="123">0</text><text x="42" y="217">1</text><text x="42" y="228">0</text><text x="42" y="323">2</text><text x="42" y="334">0</text><text x="42" y="428">3</text><text x="42" y="439">0</text><text x="42" y="533">4</text><text x="42" y="544">0</text><text x="42" y="638">5</text><text x="42" y="649">0</text><text x="42" y="743">6</text><text x="42" y="754">0</text><text x="42" y="848">7</text><text x="42" y="859">0</text><text x="42" y="953">8</text><text x="42" y="964">0</text></g></svg><div class="abs" style="left:56px;top:105px;width:1807px;height:914px;background:#f5f5f5"></div><svg class="abs" style="left:0;top:0" width="1920" height="1040"><defs><clipPath id="cvclip"><rect x="56" y="105" width="1807" height="914"/></clipPath><clipPath id="redclip"><path d="M513,380.00 L519,378.77 L525,377.56 L531,376.37 L537,375.20 L543,374.05 L549,372.92 L555,371.80 L561,370.71 L567,369.64 L573,368.59 L579,367.55 L585,366.54 L591,365.54 L597,364.57 L603,363.61 L609,362.67 L615,361.76 L621,360.86 L627,359.98 L633,359.11 L639,358.27 L645,357.45 L651,356.64 L657,355.85 L663,355.09 L669,354.34 L675,353.60 L681,352.89 L687,352.19 L693,351.52 L699,350.86 L705,350.22 L711,349.59 L717,348.99 L723,348.40 L729,347.83 L735,347.28 L741,346.74 L747,346.22 L753,345.72 L759,345.24 L765,344.77 L771,344.32 L777,343.89 L783,343.47 L789,343.07 L795,342.69 L801,342.32 L807,341.97 L813,341.64 L819,341.32 L825,341.02 L831,340.73 L837,340.46 L843,340.20 L849,339.96 L855,339.73 L861,339.52 L867,339.33 L873,339.15 L879,338.98 L885,338.83 L891,338.69 L897,338.56 L903,338.45 L909,338.35 L915,338.27 L921,338.20 L927,338.14 L933,338.09 L939,338.05 L945,338.02 L951,338.01 L957,338.00 L963,338.00 L969,338.01 L975,338.02 L981,338.05 L987,338.09 L993,338.14 L999,338.20 L1005,338.27 L1011,338.35 L1017,338.45 L1023,338.56 L1029,338.69 L1035,338.83 L1041,338.98 L1047,339.15 L1053,339.33 L1059,339.52 L1065,339.73 L1071,339.96 L1077,340.20 L1083,340.46 L1089,340.73 L1095,341.02 L1101,341.32 L1107,341.64 L1113,341.97 L1119,342.32 L1125,342.69 L1131,343.07 L1137,343.47 L1143,343.89 L1149,344.32 L1155,344.77 L1161,345.24 L1167,345.72 L1173,346.22 L1179,346.74 L1185,347.28 L1191,347.83 L1197,348.40 L1203,348.99 L1209,349.59 L1215,350.22 L1221,350.86 L1227,351.52 L1233,352.19 L1239,352.89 L1245,353.60 L1251,354.34 L1257,355.09 L1263,355.85 L1269,356.64 L1275,357.45 L1281,358.27 L1287,359.11 L1293,359.98 L1299,360.86 L1305,361.76 L1311,362.67 L1317,363.61 L1323,364.57 L1329,365.54 L1335,366.54 L1341,367.55 L1347,368.59 L1353,369.64 L1359,370.71 L1365,371.80 L1371,372.92 L1377,374.05 L1383,375.20 L1389,376.37 L1395,377.56 L1401,378.77 L1407,380.00 L1407,380.00 A422,422 0 0 1 1407,747 L1407,747.50 L1407,747.50 L1401,748.73 L1395,749.94 L1389,751.13 L1383,752.30 L1377,753.45 L1371,754.58 L1365,755.70 L1359,756.79 L1353,757.86 L1347,758.91 L1341,759.95 L1335,760.96 L1329,761.96 L1323,762.93 L1317,763.89 L1311,764.83 L1305,765.74 L1299,766.64 L1293,767.52 L1287,768.39 L1281,769.23 L1275,770.05 L1269,770.86 L1263,771.65 L1257,772.41 L1251,773.16 L1245,773.90 L1239,774.61 L1233,775.31 L1227,775.98 L1221,776.64 L1215,777.28 L1209,777.91 L1203,778.51 L1197,779.10 L1191,779.67 L1185,780.22 L1179,780.76 L1173,781.28 L1167,781.78 L1161,782.26 L1155,782.73 L1149,783.18 L1143,783.61 L1137,784.03 L1131,784.43 L1125,784.81 L1119,785.18 L1113,785.53 L1107,785.86 L1101,786.18 L1095,786.48 L1089,786.77 L1083,787.04 L1077,787.30 L1071,787.54 L1065,787.77 L1059,787.98 L1053,788.17 L1047,788.35 L1041,788.52 L1035,788.67 L1029,788.81 L1023,788.94 L1017,789.05 L1011,789.15 L1005,789.23 L999,789.30 L993,789.36 L987,789.41 L981,789.45 L975,789.48 L969,789.49 L963,789.50 L957,789.50 L951,789.49 L945,789.48 L939,789.45 L933,789.41 L927,789.36 L921,789.30 L915,789.23 L909,789.15 L903,789.05 L897,788.94 L891,788.81 L885,788.67 L879,788.52 L873,788.35 L867,788.17 L861,787.98 L855,787.77 L849,787.54 L843,787.30 L837,787.04 L831,786.77 L825,786.48 L819,786.18 L813,785.86 L807,785.53 L801,785.18 L795,784.81 L789,784.43 L783,784.03 L777,783.61 L771,783.18 L765,782.73 L759,782.26 L753,781.78 L747,781.28 L741,780.76 L735,780.22 L729,779.67 L723,779.10 L717,778.51 L711,777.91 L705,777.28 L699,776.64 L693,775.98 L687,775.31 L681,774.61 L675,773.90 L669,773.16 L663,772.41 L657,771.65 L651,770.86 L645,770.05 L639,769.23 L633,768.39 L627,767.52 L621,766.64 L615,765.74 L609,764.83 L603,763.89 L597,762.93 L591,761.96 L585,760.96 L579,759.95 L573,758.91 L567,757.86 L561,756.79 L555,755.70 L549,754.58 L543,753.45 L537,752.30 L531,751.13 L525,749.94 L519,748.73 L513,747.50 L496,713 A158,158 0 0 0 496,415 Z"/><circle cx="1485" cy="564" r="158"/></clipPath></defs><g clip-path="url(#cvclip)"><rect x="297.5" y="127.5" width="1325" height="873" fill="#fff"/><path d="M513,380.00 L519,378.77 L525,377.56 L531,376.37 L537,375.20 L543,374.05 L549,372.92 L555,371.80 L561,370.71 L567,369.64 L573,368.59 L579,367.55 L585,366.54 L591,365.54 L597,364.57 L603,363.61 L609,362.67 L615,361.76 L621,360.86 L627,359.98 L633,359.11 L639,358.27 L645,357.45 L651,356.64 L657,355.85 L663,355.09 L669,354.34 L675,353.60 L681,352.89 L687,352.19 L693,351.52 L699,350.86 L705,350.22 L711,349.59 L717,348.99 L723,348.40 L729,347.83 L735,347.28 L741,346.74 L747,346.22 L753,345.72 L759,345.24 L765,344.77 L771,344.32 L777,343.89 L783,343.47 L789,343.07 L795,342.69 L801,342.32 L807,341.97 L813,341.64 L819,341.32 L825,341.02 L831,340.73 L837,340.46 L843,340.20 L849,339.96 L855,339.73 L861,339.52 L867,339.33 L873,339.15 L879,338.98 L885,338.83 L891,338.69 L897,338.56 L903,338.45 L909,338.35 L915,338.27 L921,338.20 L927,338.14 L933,338.09 L939,338.05 L945,338.02 L951,338.01 L957,338.00 L963,338.00 L969,338.01 L975,338.02 L981,338.05 L987,338.09 L993,338.14 L999,338.20 L1005,338.27 L1011,338.35 L1017,338.45 L1023,338.56 L1029,338.69 L1035,338.83 L1041,338.98 L1047,339.15 L1053,339.33 L1059,339.52 L1065,339.73 L1071,339.96 L1077,340.20 L1083,340.46 L1089,340.73 L1095,341.02 L1101,341.32 L1107,341.64 L1113,341.97 L1119,342.32 L1125,342.69 L1131,343.07 L1137,343.47 L1143,343.89 L1149,344.32 L1155,344.77 L1161,345.24 L1167,345.72 L1173,346.22 L1179,346.74 L1185,347.28 L1191,347.83 L1197,348.40 L1203,348.99 L1209,349.59 L1215,350.22 L1221,350.86 L1227,351.52 L1233,352.19 L1239,352.89 L1245,353.60 L1251,354.34 L1257,355.09 L1263,355.85 L1269,356.64 L1275,357.45 L1281,358.27 L1287,359.11 L1293,359.98 L1299,360.86 L1305,361.76 L1311,362.67 L1317,363.61 L1323,364.57 L1329,365.54 L1335,366.54 L1341,367.55 L1347,368.59 L1353,369.64 L1359,370.71 L1365,371.80 L1371,372.92 L1377,374.05 L1383,375.20 L1389,376.37 L1395,377.56 L1401,378.77 L1407,380.00 L1407,380.00 A422,422 0 0 1 1407,747 L1407,747.50 L1407,747.50 L1401,748.73 L1395,749.94 L1389,751.13 L1383,752.30 L1377,753.45 L1371,754.58 L1365,755.70 L1359,756.79 L1353,757.86 L1347,758.91 L1341,759.95 L1335,760.96 L1329,761.96 L1323,762.93 L1317,763.89 L1311,764.83 L1305,765.74 L1299,766.64 L1293,767.52 L1287,768.39 L1281,769.23 L1275,770.05 L1269,770.86 L1263,771.65 L1257,772.41 L1251,773.16 L1245,773.90 L1239,774.61 L1233,775.31 L1227,775.98 L1221,776.64 L1215,777.28 L1209,777.91 L1203,778.51 L1197,779.10 L1191,779.67 L1185,780.22 L1179,780.76 L1173,781.28 L1167,781.78 L1161,782.26 L1155,782.73 L1149,783.18 L1143,783.61 L1137,784.03 L1131,784.43 L1125,784.81 L1119,785.18 L1113,785.53 L1107,785.86 L1101,786.18 L1095,786.48 L1089,786.77 L1083,787.04 L1077,787.30 L1071,787.54 L1065,787.77 L1059,787.98 L1053,788.17 L1047,788.35 L1041,788.52 L1035,788.67 L1029,788.81 L1023,788.94 L1017,789.05 L1011,789.15 L1005,789.23 L999,789.30 L993,789.36 L987,789.41 L981,789.45 L975,789.48 L969,789.49 L963,789.50 L957,789.50 L951,789.49 L945,789.48 L939,789.45 L933,789.41 L927,789.36 L921,789.30 L915,789.23 L909,789.15 L903,789.05 L897,788.94 L891,788.81 L885,788.67 L879,788.52 L873,788.35 L867,788.17 L861,787.98 L855,787.77 L849,787.54 L843,787.30 L837,787.04 L831,786.77 L825,786.48 L819,786.18 L813,785.86 L807,785.53 L801,785.18 L795,784.81 L789,784.43 L783,784.03 L777,783.61 L771,783.18 L765,782.73 L759,782.26 L753,781.78 L747,781.28 L741,780.76 L735,780.22 L729,779.67 L723,779.10 L717,778.51 L711,777.91 L705,777.28 L699,776.64 L693,775.98 L687,775.31 L681,774.61 L675,773.90 L669,773.16 L663,772.41 L657,771.65 L651,770.86 L645,770.05 L639,769.23 L633,768.39 L627,767.52 L621,766.64 L615,765.74 L609,764.83 L603,763.89 L597,762.93 L591,761.96 L585,760.96 L579,759.95 L573,758.91 L567,757.86 L561,756.79 L555,755.70 L549,754.58 L543,753.45 L537,752.30 L531,751.13 L525,749.94 L519,748.73 L513,747.50 L496,713 A158,158 0 0 0 496,415 Z" fill="#e05c61"/><circle cx="1485" cy="564" r="158" fill="#e05c61"/><rect x="297.5" y="127.5" width="1325" height="873" fill="none" stroke="#111" stroke-width="1.6"/><g fill="#fff"><rect x="296.4" y="551" width="2.4" height="24"/><rect x="943" y="126.4" width="33" height="2.4"/><rect x="943" y="999.2" width="33" height="2.4"/></g><rect x="1621.2" y="551" width="2.4" height="24" fill="#e05c61"/><g fill="none" stroke="#4cdce2" stroke-width="0.9"><line x1="958.5" y1="105" x2="958.5" y2="1019"/><line x1="56" y1="564.5" x2="1863" y2="564.5"/><ellipse cx="959.5" cy="564" rx="662.5" ry="436.5"/><ellipse cx="959.5" cy="564" rx="599.5" ry="374"/></g><g clip-path="url(#redclip)" fill="none" stroke="#c6d2d2" stroke-width="1.5"><line x1="958.5" y1="105" x2="958.5" y2="1019"/><line x1="56" y1="564.5" x2="1863" y2="564.5"/><ellipse cx="959.5" cy="564" rx="662.5" ry="436.5"/><ellipse cx="959.5" cy="564" rx="599.5" ry="374"/></g><path d="M513,380.00 L519,378.77 L525,377.56 L531,376.37 L537,375.20 L543,374.05 L549,372.92 L555,371.80 L561,370.71 L567,369.64 L573,368.59 L579,367.55 L585,366.54 L591,365.54 L597,364.57 L603,363.61 L609,362.67 L615,361.76 L621,360.86 L627,359.98 L633,359.11 L639,358.27 L645,357.45 L651,356.64 L657,355.85 L663,355.09 L669,354.34 L675,353.60 L681,352.89 L687,352.19 L693,351.52 L699,350.86 L705,350.22 L711,349.59 L717,348.99 L723,348.40 L729,347.83 L735,347.28 L741,346.74 L747,346.22 L753,345.72 L759,345.24 L765,344.77 L771,344.32 L777,343.89 L783,343.47 L789,343.07 L795,342.69 L801,342.32 L807,341.97 L813,341.64 L819,341.32 L825,341.02 L831,340.73 L837,340.46 L843,340.20 L849,339.96 L855,339.73 L861,339.52 L867,339.33 L873,339.15 L879,338.98 L885,338.83 L891,338.69 L897,338.56 L903,338.45 L909,338.35 L915,338.27 L921,338.20 L927,338.14 L933,338.09 L939,338.05 L945,338.02 L951,338.01 L957,338.00 L963,338.00 L969,338.01 L975,338.02 L981,338.05 L987,338.09 L993,338.14 L999,338.20 L1005,338.27 L1011,338.35 L1017,338.45 L1023,338.56 L1029,338.69 L1035,338.83 L1041,338.98 L1047,339.15 L1053,339.33 L1059,339.52 L1065,339.73 L1071,339.96 L1077,340.20 L1083,340.46 L1089,340.73 L1095,341.02 L1101,341.32 L1107,341.64 L1113,341.97 L1119,342.32 L1125,342.69 L1131,343.07 L1137,343.47 L1143,343.89 L1149,344.32 L1155,344.77 L1161,345.24 L1167,345.72 L1173,346.22 L1179,346.74 L1185,347.28 L1191,347.83 L1197,348.40 L1203,348.99 L1209,349.59 L1215,350.22 L1221,350.86 L1227,351.52 L1233,352.19 L1239,352.89 L1245,353.60 L1251,354.34 L1257,355.09 L1263,355.85 L1269,356.64 L1275,357.45 L1281,358.27 L1287,359.11 L1293,359.98 L1299,360.86 L1305,361.76 L1311,362.67 L1317,363.61 L1323,364.57 L1329,365.54 L1335,366.54 L1341,367.55 L1347,368.59 L1353,369.64 L1359,370.71 L1365,371.80 L1371,372.92 L1377,374.05 L1383,375.20 L1389,376.37 L1395,377.56 L1401,378.77 L1407,380.00 L1407,380.00 A422,422 0 0 1 1407,747 L1407,747.50 L1407,747.50 L1401,748.73 L1395,749.94 L1389,751.13 L1383,752.30 L1377,753.45 L1371,754.58 L1365,755.70 L1359,756.79 L1353,757.86 L1347,758.91 L1341,759.95 L1335,760.96 L1329,761.96 L1323,762.93 L1317,763.89 L1311,764.83 L1305,765.74 L1299,766.64 L1293,767.52 L1287,768.39 L1281,769.23 L1275,770.05 L1269,770.86 L1263,771.65 L1257,772.41 L1251,773.16 L1245,773.90 L1239,774.61 L1233,775.31 L1227,775.98 L1221,776.64 L1215,777.28 L1209,777.91 L1203,778.51 L1197,779.10 L1191,779.67 L1185,780.22 L1179,780.76 L1173,781.28 L1167,781.78 L1161,782.26 L1155,782.73 L1149,783.18 L1143,783.61 L1137,784.03 L1131,784.43 L1125,784.81 L1119,785.18 L1113,785.53 L1107,785.86 L1101,786.18 L1095,786.48 L1089,786.77 L1083,787.04 L1077,787.30 L1071,787.54 L1065,787.77 L1059,787.98 L1053,788.17 L1047,788.35 L1041,788.52 L1035,788.67 L1029,788.81 L1023,788.94 L1017,789.05 L1011,789.15 L1005,789.23 L999,789.30 L993,789.36 L987,789.41 L981,789.45 L975,789.48 L969,789.49 L963,789.50 L957,789.50 L951,789.49 L945,789.48 L939,789.45 L933,789.41 L927,789.36 L921,789.30 L915,789.23 L909,789.15 L903,789.05 L897,788.94 L891,788.81 L885,788.67 L879,788.52 L873,788.35 L867,788.17 L861,787.98 L855,787.77 L849,787.54 L843,787.30 L837,787.04 L831,786.77 L825,786.48 L819,786.18 L813,785.86 L807,785.53 L801,785.18 L795,784.81 L789,784.43 L783,784.03 L777,783.61 L771,783.18 L765,782.73 L759,782.26 L753,781.78 L747,781.28 L741,780.76 L735,780.22 L729,779.67 L723,779.10 L717,778.51 L711,777.91 L705,777.28 L699,776.64 L693,775.98 L687,775.31 L681,774.61 L675,773.90 L669,773.16 L663,772.41 L657,771.65 L651,770.86 L645,770.05 L639,769.23 L633,768.39 L627,767.52 L621,766.64 L615,765.74 L609,764.83 L603,763.89 L597,762.93 L591,761.96 L585,760.96 L579,759.95 L573,758.91 L567,757.86 L561,756.79 L555,755.70 L549,754.58 L543,753.45 L537,752.30 L531,751.13 L525,749.94 L519,748.73 L513,747.50 L496,713 A158,158 0 0 0 496,415 Z" fill="none" stroke="#47600f" stroke-width="1.2"/><circle cx="1485" cy="564" r="158" fill="none" stroke="#47600f" stroke-width="1.2"/><rect x="496.5" y="338.5" width="1146" height="451" fill="none" stroke="#2f7d1c" stroke-width="1"/><rect x="493.5" y="335.5" width="6" height="6" fill="#fff" stroke="#2f7d1c" stroke-width="1"/><rect x="1066.5" y="335.5" width="6" height="6" fill="#fff" stroke="#2f7d1c" stroke-width="1"/><rect x="1640.5" y="335.5" width="6" height="6" fill="#fff" stroke="#2f7d1c" stroke-width="1"/><rect x="493.5" y="561.5" width="6" height="6" fill="#fff" stroke="#2f7d1c" stroke-width="1"/><rect x="1640.5" y="561.5" width="6" height="6" fill="#fff" stroke="#2f7d1c" stroke-width="1"/><rect x="493.5" y="786.5" width="6" height="6" fill="#fff" stroke="#2f7d1c" stroke-width="1"/><rect x="1066.5" y="786.5" width="6" height="6" fill="#fff" stroke="#2f7d1c" stroke-width="1"/><rect x="1640.5" y="786.5" width="6" height="6" fill="#fff" stroke="#2f7d1c" stroke-width="1"/><rect x="511.5" y="378.5" width="4" height="4" fill="#0b7a16"/><rect x="494.5" y="413.5" width="4" height="4" fill="#0b7a16"/><rect x="599.5" y="562.5" width="4" height="4" fill="#0b7a16"/><rect x="494.5" y="711.5" width="4" height="4" fill="#0b7a16"/><rect x="511.5" y="745.5" width="4" height="4" fill="#0b7a16"/><rect x="956.5" y="336.5" width="4" height="4" fill="#0b7a16"/><rect x="1405.5" y="378.5" width="4" height="4" fill="#0b7a16"/><rect x="1405.5" y="745.5" width="4" height="4" fill="#0b7a16"/><rect x="956.5" y="787.5" width="4" height="4" fill="#0b7a16"/><rect x="1483.5" y="404.5" width="4" height="4" fill="#0b7a16"/><rect x="1325.5" y="562.5" width="4" height="4" fill="#0b7a16"/><rect x="1483.5" y="719.5" width="4" height="4" fill="#0b7a16"/><rect x="1483.5" y="562.5" width="4" height="4" fill="#0b7a16"/><rect x="1447.5" y="562.5" width="4" height="4" fill="#0b7a16"/></g></svg><div class="abs" style="left:1863px;top:105px;width:16px;height:914px;background:#f0f0f0;border-left:1px solid #e4e4e4"></div><div class="abs" style="left:1866px;top:1008px;width:0;height:0;border-left:4px solid transparent;border-right:4px solid transparent;border-top:4px solid #444"></div><div class="abs" style="left:40px;top:1019px;width:1839px;height:17px;background:#f0f0f0;border-top:1px solid #dadada"></div><div class="abs" style="left:40px;top:1019px;width:59px;height:16px;background:#fff"></div><div class="t" style="left:45px;top:1021px;font-size:11px">371%</div><div class="abs" style="left:87px;top:1027px;width:0;height:0;border-left:4px solid transparent;border-right:4px solid transparent;border-top:4px solid #111"></div><div class="abs" style="left:99px;top:1019px;width:34px;height:16px;background:#dedede"></div><svg class="abs" style="left:102px;top:1021px" width="30" height="12"><path d="M2 1 L2 10" stroke="#888"/><path d="M8 1 L4 5.5 L8 10 Z M20 1 L16 5.5 L20 10 Z" fill="#999"/></svg><div class="abs" style="left:133px;top:1019px;width:43px;height:16px;background:#fff"></div><div class="t" style="left:138px;top:1021px;font-size:11px">1</div><div class="abs" style="left:164px;top:1027px;width:0;height:0;border-left:4px solid transparent;border-right:4px solid transparent;border-top:4px solid #111"></div><div class="abs" style="left:176px;top:1019px;width:34px;height:16px;background:#dedede"></div><svg class="abs" style="left:180px;top:1021px" width="26" height="12"><path d="M4 1 L8 5.5 L4 10 Z M15 1 L19 5.5 L15 10 Z" fill="#999"/><path d="M21 1 L21 10" stroke="#888"/></svg><div class="abs" style="left:210px;top:1020px;width:179px;height:15px;background:#d4d4d4;border:1px solid #c0c0c0"></div><div class="t" style="left:282px;top:1021px;font-size:11px">Auswahl</div><div class="abs" style="left:378px;top:1022px;width:0;height:0;border-top:5px solid transparent;border-bottom:5px solid transparent;border-left:5px solid #111"></div><div class="abs" style="left:395px;top:1024px;width:0;height:0;border-top:3px solid transparent;border-bottom:3px solid transparent;border-right:3px solid #444"></div><div class="abs" style="left:1119px;top:1020px;width:14px;height:14px;background:linear-gradient(#fafafa,#d0d0d0);border:1px solid #9a9a9a;border-radius:2px"></div><div class="abs" style="left:1853px;top:1024px;width:0;height:0;border-top:3px solid transparent;border-bottom:3px solid transparent;border-left:3px solid #444"></div><div class="abs" style="left:1863px;top:1019px;width:16px;height:17px;background:#fff"></div><div class="abs" style="left:1879px;top:68px;width:37px;height:968px;background:#646464;border-left:1px solid #444"></div><div class="abs" style="left:1879px;top:68px;width:37px;height:12px;background:linear-gradient(#3e3e3e,#555)"></div><svg class="abs" style="left:1903px;top:71px" width="10" height="7"><path d="M4 0 L0 3.5 L4 7 Z M9 0 L5 3.5 L9 7 Z" fill="#ccc"/></svg><div class="abs" style="left:1880px;top:80px;width:35px;height:104px;background:#d6d6d6;border-bottom:1px solid #9a9a9a;border-top:1px solid #f0f0f0"></div><div class="abs" style="left:1886px;top:84px;width:24px;height:1px;background:repeating-linear-gradient(90deg,#9a9a9a 0 1px,transparent 1px 2px)"></div><div class="abs" style="left:1880px;top:184px;width:35px;height:104px;background:#d6d6d6;border-bottom:1px solid #9a9a9a;border-top:1px solid #f0f0f0"></div><div class="abs" style="left:1886px;top:188px;width:24px;height:1px;background:repeating-linear-gradient(90deg,#9a9a9a 0 1px,transparent 1px 2px)"></div><div class="abs" style="left:1880px;top:288px;width:35px;height:104px;background:#d6d6d6;border-bottom:1px solid #9a9a9a;border-top:1px solid #f0f0f0"></div><div class="abs" style="left:1886px;top:292px;width:24px;height:1px;background:repeating-linear-gradient(90deg,#9a9a9a 0 1px,transparent 1px 2px)"></div><div class="abs" style="left:1880px;top:392px;width:35px;height:104px;background:#d6d6d6;border-bottom:1px solid #9a9a9a;border-top:1px solid #f0f0f0"></div><div class="abs" style="left:1886px;top:396px;width:24px;height:1px;background:repeating-linear-gradient(90deg,#9a9a9a 0 1px,transparent 1px 2px)"></div><div class="abs" style="left:1880px;top:496px;width:35px;height:78px;background:#d6d6d6;border-bottom:1px solid #9a9a9a;border-top:1px solid #f0f0f0"></div><div class="abs" style="left:1886px;top:500px;width:24px;height:1px;background:repeating-linear-gradient(90deg,#9a9a9a 0 1px,transparent 1px 2px)"></div><svg class="abs" style="left:1886px;top:96px" width="22" height="20"><path d="M3 12 Q1 5 10 3 Q19 2 19 8 Q19 11 15 11 Q12 11 13 14 Q13 18 8 17 Q4 16 3 12 Z" fill="#333"/><circle cx="7" cy="8" r="1.6" fill="#fff"/><circle cx="11" cy="6" r="1.6" fill="#fff"/><circle cx="15" cy="7" r="1.4" fill="#fff"/><circle cx="7" cy="13" r="1.6" fill="#fff"/></svg><svg class="abs" style="left:1886px;top:127px" width="22" height="20"><rect x="4" y="3" width="3" height="3" fill="#222"/><rect x="4" y="7" width="3" height="3" fill="#555"/><rect x="4" y="11" width="3" height="3" fill="#888"/><rect x="4" y="15" width="3" height="3" fill="#bbb"/><rect x="8" y="3" width="3" height="3" fill="#555"/><rect x="8" y="7" width="3" height="3" fill="#888"/><rect x="8" y="11" width="3" height="3" fill="#bbb"/><rect x="8" y="15" width="3" height="3" fill="#222"/><rect x="12" y="3" width="3" height="3" fill="#888"/><rect x="12" y="7" width="3" height="3" fill="#bbb"/><rect x="12" y="11" width="3" height="3" fill="#222"/><rect x="12" y="15" width="3" height="3" fill="#555"/><rect x="16" y="3" width="3" height="3" fill="#bbb"/><rect x="16" y="7" width="3" height="3" fill="#222"/><rect x="16" y="11" width="3" height="3" fill="#555"/><rect x="16" y="15" width="3" height="3" fill="#888"/></svg><svg class="abs" style="left:1886px;top:156px" width="22" height="20"><defs><linearGradient id="dg" x1="0" y1="0" x2="1" y2="1"><stop offset="0" stop-color="#fff"/><stop offset="1" stop-color="#111"/></linearGradient></defs><path d="M4 2 Q17 3 18 17 L4 17 Z" fill="url(#dg)" stroke="#222"/></svg><svg class="abs" style="left:1886px;top:199px" width="22" height="20"><rect x="7" y="11" width="8" height="7" fill="#fff" stroke="#111" stroke-width="1.6"/><path d="M8 11 L5 2 M11 11 L11 1 M14 11 L18 3" stroke="#222" stroke-width="2"/><path d="M15 3 Q19 4 18 8" fill="#333"/></svg><svg class="abs" style="left:1886px;top:230px" width="22" height="20"><circle cx="11" cy="6" r="3.8" fill="#222"/><circle cx="6.5" cy="11" r="3.8" fill="#222"/><circle cx="15.5" cy="11" r="3.8" fill="#222"/><path d="M11 9 L8 18 L14 18 Z" fill="#222"/></svg><svg class="abs" style="left:1886px;top:260px" width="22" height="20"><rect x="8.5" y="2.5" width="10" height="10" fill="#fff" stroke="#333"/><rect x="3.5" y="10.5" width="6" height="6" fill="#fff" stroke="#333"/><rect x="5.5" y="12.5" width="5" height="5" fill="#ddd" stroke="#333"/></svg><svg class="abs" style="left:1886px;top:303px" width="22" height="20"><rect x="3" y="4" width="16" height="2" fill="#222"/><rect x="3" y="8" width="16" height="2" fill="#222"/><rect x="3" y="12" width="16" height="2.5" fill="#222"/><rect x="3" y="16" width="16" height="2" fill="#222"/></svg><svg class="abs" style="left:1886px;top:334px" width="22" height="20"><text x="3" y="17" font-family="Liberation Sans" font-size="17" fill="#222">A</text><line x1="16.5" y1="3" x2="16.5" y2="18" stroke="#222" stroke-width="1.3"/></svg><svg class="abs" style="left:1886px;top:365px" width="22" height="20"><path d="M9 3 L16 3 L16 18 M13 3 L13 18" stroke="#222" stroke-width="1.6" fill="none"/><circle cx="9" cy="7" r="4" fill="#222"/></svg><svg class="abs" style="left:1886px;top:408px" width="22" height="20"><defs><radialGradient id="rg1" cx="35%" cy="35%"><stop offset="0" stop-color="#ddd"/><stop offset="1" stop-color="#111"/></radialGradient></defs><circle cx="11" cy="10" r="7" fill="#eee" stroke="#888"/><circle cx="11" cy="10" r="5" fill="url(#rg1)"/></svg><svg class="abs" style="left:1886px;top:438px" width="22" height="20"><defs><linearGradient id="gd2"><stop offset="0" stop-color="#fff"/><stop offset="1" stop-color="#111"/></linearGradient></defs><rect x="3.5" y="4.5" width="15" height="11" fill="url(#gd2)" stroke="#333"/></svg><svg class="abs" style="left:1886px;top:468px" width="22" height="20"><circle cx="9" cy="8" r="5.5" fill="#444" stroke="#222"/><circle cx="13" cy="12" r="5.5" fill="#ddd" stroke="#222" fill-opacity="0.85"/></svg><svg class="abs" style="left:1886px;top:511px" width="22" height="20"><line x1="3.5" y1="2" x2="3.5" y2="18" stroke="#111" stroke-width="1.5"/><rect x="5" y="4" width="8" height="5" fill="#777"/><rect x="5" y="11" width="14" height="6" fill="#111"/></svg><div class="abs" style="left:1883px;top:538px;width:28px;height:27px;background:linear-gradient(#8a8a8a,#a8a8a8);border:1px solid #555;border-radius:3px"></div><svg class="abs" style="left:1886px;top:541px" width="22" height="20"><rect x="4" y="3" width="9" height="9" fill="#333"/><rect x="9" y="8" width="9" height="9" fill="#111"/><rect x="9.5" y="8.5" width="3" height="3" fill="none" stroke="#ddd"/></svg><div class="abs" style="left:1589px;top:92px;width:287px;height:231px;background:#d6d6d6;border:1px solid #333;border-top:none;border-radius:4px 4px 0 0"></div><div class="abs" style="left:1589px;top:92px;width:287px;height:13px;background:linear-gradient(#5a5a5a,#3a3a3a);border-radius:4px 4px 0 0"></div><svg class="abs" style="left:1850px;top:94px" width="26" height="10"><path d="M4.5 2 L1 5 L4.5 8 Z M8.5 2 L5 5 L8.5 8 Z" fill="#ddd"/><line x1="12.5" y1="1" x2="12.5" y2="9" stroke="#777"/><path d="M16.5 2 L22.5 8 M22.5 2 L16.5 8" stroke="#eee" stroke-width="1.5"/></svg><div class="abs" style="left:1590px;top:105px;width:285px;height:18px;background:linear-gradient(#7e7e7e,#a4a4a4)"></div><div class="abs" style="left:1590px;top:105px;width:47px;height:18px;background:linear-gradient(#e4e4e4,#d2d2d2)"></div><div class="t" style="left:1597px;top:108px;font-size:11px;color:#333">Ebenen</div><svg class="abs" style="left:1856px;top:108px" width="16" height="10"><path d="M0 3 L5 3 L2.5 6 Z" fill="#222"/><path d="M6 1.5 L15 1.5 M6 4.5 L15 4.5 M6 7.5 L15 7.5" stroke="#333"/></svg><div class="abs" style="left:1592px;top:123px;width:266px;height:1px;background:#111"></div><div class="abs" style="left:1637px;top:124px;width:220px;height:178px;background:#fff"></div><div class="abs" style="left:1592px;top:124px;width:44px;height:178px;background:#c8c8c8"></div><div class="abs" style="left:1636px;top:124px;width:1px;height:178px;background:#111"></div><div class="abs" style="left:1593px;top:124px;width:43px;height:20px;background:#cdcdcd;border-top:1px solid #eaeaea;border-bottom:1px solid #a8a8a8"></div><div class="abs" style="left:1596px;top:127px;width:13px;height:14px;background:#c4c4c4;border:1px solid #e6e6e6"></div><svg class="abs" style="left:1596px;top:128px" width="13" height="12"><path d="M1 6 Q6.5 0 12 6 Q6.5 12 1 6 Z" fill="#fff" stroke="#111" stroke-width="1.2"/><circle cx="6.5" cy="6" r="2.6" fill="#111"/></svg><div class="abs" style="left:1612px;top:127px;width:13px;height:14px;background:#d6d6d6;border:1px solid #ececec"></div><div class="abs" style="left:1628px;top:127px;width:5px;height:15px;background:#0f8a14"></div><div class="abs" style="left:1637px;top:124px;width:220px;height:20px;background:#d6d6d6;border-bottom:1px solid #a0a0a0"></div><svg class="abs" style="left:1639px;top:130px" width="14" height="9"><path d="M1 1 L12 1 L6.5 8 Z" fill="#f2f2f2" stroke="#888"/></svg><div class="abs" style="left:1654px;top:126px;width:17px;height:17px;background:#fff;border:1px solid #111"></div><div class="abs" style="left:1657px;top:133px;width:11px;height:4px;background:#e05c61;border-radius:2px"></div><div class="t" style="left:1674px;top:127px;font-size:10.5px;letter-spacing:-0.25px;color:#222">Meine Ebene</div><svg class="abs" style="left:1832px;top:128px" width="12" height="12"><circle cx="6" cy="6" r="4.6" fill="none" stroke="#333" stroke-width="1.1"/></svg><div class="abs" style="left:1849px;top:132px;width:6px;height:6px;background:#0f8a14"></div><svg class="abs" style="left:1851px;top:125px" width="6" height="6"><path d="M0 0 L6 0 L6 6 Z" fill="#111"/></svg><div class="abs" style="left:1593px;top:144px;width:43px;height:20px;background:#cdcdcd;border-top:1px solid #eaeaea;border-bottom:1px solid #a8a8a8"></div><div class="abs" style="left:1596px;top:147px;width:13px;height:14px;background:#c4c4c4;border:1px solid #e6e6e6"></div><svg class="abs" style="left:1596px;top:148px" width="13" height="12"><path d="M1 6 Q6.5 0 12 6 Q6.5 12 1 6 Z" fill="#fff" stroke="#111" stroke-width="1.2"/><circle cx="6.5" cy="6" r="2.6" fill="#111"/></svg><div class="abs" style="left:1612px;top:147px;width:13px;height:14px;background:#d6d6d6;border:1px solid #ececec"></div><div class="abs" style="left:1628px;top:147px;width:5px;height:15px;background:#0f8a14"></div><div class="abs" style="left:1670px;top:163px;width:187px;height:1px;background:#a8a8a8"></div><div class="abs" style="left:1669px;top:146px;width:17px;height:17px;background:#fff;border:1px solid #111"></div><div class="t" style="left:1690px;top:147px;font-size:10.5px;letter-spacing:-0.3px;color:#222">&lt;Hilfslinie&gt;</div><svg class="abs" style="left:1832px;top:148px" width="12" height="12"><circle cx="6" cy="6" r="4.6" fill="none" stroke="#333" stroke-width="1.1"/></svg><div class="abs" style="left:1593px;top:164px;width:43px;height:20px;background:#cdcdcd;border-top:1px solid #eaeaea;border-bottom:1px solid #a8a8a8"></div><div class="abs" style="left:1596px;top:167px;width:13px;height:14px;background:#c4c4c4;border:1px solid #e6e6e6"></div><svg class="abs" style="left:1596px;top:168px" width="13" height="12"><path d="M1 6 Q6.5 0 12 6 Q6.5 12 1 6 Z" fill="#fff" stroke="#111" stroke-width="1.2"/><circle cx="6.5" cy="6" r="2.6" fill="#111"/></svg><div class="abs" style="left:1612px;top:167px;width:13px;height:14px;background:#d6d6d6;border:1px solid #ececec"></div><div class="abs" style="left:1628px;top:167px;width:5px;height:15px;background:#0f8a14"></div><div class="abs" style="left:1670px;top:183px;width:187px;height:1px;background:#a8a8a8"></div><div class="abs" style="left:1669px;top:166px;width:17px;height:17px;background:#fff;border:1px solid #111"></div><div class="t" style="left:1690px;top:167px;font-size:10.5px;letter-spacing:-0.3px;color:#222">&lt;Hilfslinie&gt;</div><svg class="abs" style="left:1832px;top:168px" width="12" height="12"><circle cx="6" cy="6" r="4.6" fill="none" stroke="#333" stroke-width="1.1"/></svg><div class="abs" style="left:1593px;top:184px;width:43px;height:20px;background:#cdcdcd;border-top:1px solid #eaeaea;border-bottom:1px solid #a8a8a8"></div><div class="abs" style="left:1596px;top:187px;width:13px;height:14px;background:#c4c4c4;border:1px solid #e6e6e6"></div><svg class="abs" style="left:1596px;top:188px" width="13" height="12"><path d="M1 6 Q6.5 0 12 6 Q6.5 12 1 6 Z" fill="#fff" stroke="#111" stroke-width="1.2"/><circle cx="6.5" cy="6" r="2.6" fill="#111"/></svg><div class="abs" style="left:1612px;top:187px;width:13px;height:14px;background:#d6d6d6;border:1px solid #ececec"></div><div class="abs" style="left:1628px;top:187px;width:5px;height:15px;background:#0f8a14"></div><div class="abs" style="left:1670px;top:203px;width:187px;height:1px;background:#a8a8a8"></div><div class="abs" style="left:1669px;top:186px;width:17px;height:17px;background:#fff;border:1px solid #111"></div><div class="t" style="left:1690px;top:187px;font-size:10.5px;letter-spacing:-0.3px;color:#222">&lt;Hilfslinie&gt;</div><svg class="abs" style="left:1832px;top:188px" width="12" height="12"><circle cx="6" cy="6" r="4.6" fill="none" stroke="#333" stroke-width="1.1"/></svg><div class="abs" style="left:1593px;top:204px;width:43px;height:20px;background:#cdcdcd;border-top:1px solid #eaeaea;border-bottom:1px solid #a8a8a8"></div><div class="abs" style="left:1596px;top:207px;width:13px;height:14px;background:#c4c4c4;border:1px solid #e6e6e6"></div><svg class="abs" style="left:1596px;top:208px" width="13" height="12"><path d="M1 6 Q6.5 0 12 6 Q6.5 12 1 6 Z" fill="#fff" stroke="#111" stroke-width="1.2"/><circle cx="6.5" cy="6" r="2.6" fill="#111"/></svg><div class="abs" style="left:1612px;top:207px;width:13px;height:14px;background:#d6d6d6;border:1px solid #ececec"></div><div class="abs" style="left:1628px;top:207px;width:5px;height:15px;background:#0f8a14"></div><div class="abs" style="left:1670px;top:223px;width:187px;height:1px;background:#a8a8a8"></div><div class="abs" style="left:1669px;top:206px;width:17px;height:17px;background:#fff;border:1px solid #111"></div><div class="t" style="left:1690px;top:207px;font-size:10.5px;letter-spacing:-0.3px;color:#222">&lt;Hilfslinie&gt;</div><svg class="abs" style="left:1832px;top:208px" width="12" height="12"><circle cx="6" cy="6" r="4.6" fill="none" stroke="#333" stroke-width="1.1"/></svg><div class="abs" style="left:1593px;top:224px;width:43px;height:20px;background:#cdcdcd;border-top:1px solid #eaeaea;border-bottom:1px solid #a8a8a8"></div><div class="abs" style="left:1596px;top:227px;width:13px;height:14px;background:#c4c4c4;border:1px solid #e6e6e6"></div><svg class="abs" style="left:1596px;top:228px" width="13" height="12"><path d="M1 6 Q6.5 0 12 6 Q6.5 12 1 6 Z" fill="#fff" stroke="#111" stroke-width="1.2"/><circle cx="6.5" cy="6" r="2.6" fill="#111"/></svg><div class="abs" style="left:1612px;top:227px;width:13px;height:14px;background:#d6d6d6;border:1px solid #ececec"></div><div class="abs" style="left:1628px;top:227px;width:5px;height:15px;background:#0f8a14"></div><div class="abs" style="left:1670px;top:243px;width:187px;height:1px;background:#a8a8a8"></div><div class="abs" style="left:1669px;top:226px;width:17px;height:17px;background:#fff;border:1px solid #111"></div><div class="abs" style="left:1670px;top:227px;width:15px;height:15px;background:#e05c61;border-radius:50%"></div><div class="t" style="left:1690px;top:227px;font-size:10.5px;letter-spacing:-0.3px;color:#222">&lt;Pfad&gt;</div><svg class="abs" style="left:1831px;top:227px" width="14" height="14"><circle cx="7" cy="7" r="5.8" fill="none" stroke="#333" stroke-width="1"/><circle cx="7" cy="7" r="3.8" fill="none" stroke="#333" stroke-width="1"/></svg><div class="abs" style="left:1848px;top:231px;width:6px;height:7px;background:#1a7a1a;border:1px solid #0a3a0a"></div><div class="abs" style="left:1593px;top:244px;width:43px;height:20px;background:#cdcdcd;border-top:1px solid #eaeaea;border-bottom:1px solid #a8a8a8"></div><div class="abs" style="left:1596px;top:247px;width:13px;height:14px;background:#c4c4c4;border:1px solid #e6e6e6"></div><svg class="abs" style="left:1596px;top:248px" width="13" height="12"><path d="M1 6 Q6.5 0 12 6 Q6.5 12 1 6 Z" fill="#fff" stroke="#111" stroke-width="1.2"/><circle cx="6.5" cy="6" r="2.6" fill="#111"/></svg><div class="abs" style="left:1612px;top:247px;width:13px;height:14px;background:#d6d6d6;border:1px solid #ececec"></div><div class="abs" style="left:1628px;top:247px;width:5px;height:15px;background:#0f8a14"></div><div class="abs" style="left:1670px;top:263px;width:187px;height:1px;background:#a8a8a8"></div><div class="abs" style="left:1669px;top:246px;width:17px;height:17px;background:#fff;border:1px solid #111"></div><div class="abs" style="left:1670px;top:252px;width:15px;height:6px;background:#e05c61;border-radius:2px"></div><div class="t" style="left:1690px;top:247px;font-size:10.5px;letter-spacing:-0.3px;color:#222">&lt;Pfad&gt;</div><svg class="abs" style="left:1831px;top:247px" width="14" height="14"><circle cx="7" cy="7" r="5.8" fill="none" stroke="#333" stroke-width="1"/><circle cx="7" cy="7" r="3.8" fill="none" stroke="#333" stroke-width="1"/></svg><div class="abs" style="left:1848px;top:251px;width:6px;height:7px;background:#1a7a1a;border:1px solid #0a3a0a"></div><div class="abs" style="left:1593px;top:264px;width:43px;height:20px;background:#cdcdcd;border-top:1px solid #eaeaea;border-bottom:1px solid #a8a8a8"></div><div class="abs" style="left:1596px;top:267px;width:13px;height:14px;background:#c4c4c4;border:1px solid #e6e6e6"></div><svg class="abs" style="left:1596px;top:268px" width="13" height="12"><path d="M1 6 Q6.5 0 12 6 Q6.5 12 1 6 Z" fill="#fff" stroke="#111" stroke-width="1.2"/><circle cx="6.5" cy="6" r="2.6" fill="#111"/></svg><div class="abs" style="left:1612px;top:267px;width:13px;height:14px;background:#d6d6d6;border:1px solid #ececec"></div><svg class="abs" style="left:1613px;top:268px" width="11" height="12"><path d="M3 6 L3 4 Q5.5 0 8 4 L8 6" fill="none" stroke="#222" stroke-width="1.5"/><rect x="1.5" y="6" width="8" height="5.5" fill="#333"/></svg><div class="abs" style="left:1628px;top:267px;width:5px;height:15px;background:#0f8a14"></div><div class="abs" style="left:1670px;top:283px;width:187px;height:1px;background:#a8a8a8"></div><div class="abs" style="left:1669px;top:266px;width:17px;height:17px;background:#fff;border:1px solid #111"></div><div class="t" style="left:1690px;top:267px;font-size:10.5px;letter-spacing:-0.3px;color:#222">&lt;Pfad&gt;</div><svg class="abs" style="left:1832px;top:268px" width="12" height="12"><circle cx="6" cy="6" r="4.6" fill="none" stroke="#333" stroke-width="1.1"/></svg><div class="abs" style="left:1593px;top:284px;width:43px;height:18px;background:#cdcdcd;border-top:1px solid #eaeaea;border-bottom:1px solid #a8a8a8"></div><div class="abs" style="left:1596px;top:287px;width:13px;height:14px;background:#c4c4c4;border:1px solid #e6e6e6"></div><svg class="abs" style="left:1596px;top:288px" width="13" height="12"><path d="M1 6 Q6.5 0 12 6 Q6.5 12 1 6 Z" fill="#fff" stroke="#111" stroke-width="1.2"/><circle cx="6.5" cy="6" r="2.6" fill="#111"/></svg><div class="abs" style="left:1612px;top:287px;width:13px;height:14px;background:#d6d6d6;border:1px solid #ececec"></div><svg class="abs" style="left:1613px;top:288px" width="11" height="12"><path d="M3 6 L3 4 Q5.5 0 8 4 L8 6" fill="none" stroke="#222" stroke-width="1.5"/><rect x="1.5" y="6" width="8" height="5.5" fill="#333"/></svg><div class="abs" style="left:1628px;top:287px;width:5px;height:15px;background:#f07010"></div><div class="abs" style="left:1637px;top:284px;width:220px;height:18px;background:#d6d6d6;border-bottom:1px solid #a0a0a0"></div><svg class="abs" style="left:1640px;top:288px" width="9" height="13"><path d="M1 1 L8 6.5 L1 12 Z" fill="#f2f2f2" stroke="#888"/></svg><div class="abs" style="left:1654px;top:286px;width:17px;height:16px;background:#fff;border:1px solid #111"></div><svg class="abs" style="left:1656px;top:289px" width="13" height="9"><ellipse cx="6.5" cy="4.5" rx="5.5" ry="3.5" fill="none" stroke="#888" stroke-width="0.8"/><path d="M4 4.5 L9 4.5" stroke="#aaa"/></svg><div class="t" style="left:1674px;top:287px;font-size:10.5px;letter-spacing:-0.25px;color:#222">Vorlage</div><svg class="abs" style="left:1832px;top:288px" width="12" height="12"><circle cx="6" cy="6" r="4.6" fill="none" stroke="#333" stroke-width="1.1"/></svg><div class="abs" style="left:1857px;top:124px;width:16px;height:178px;background:#ececec;border-left:1px solid #dcdcdc"></div><div class="abs" style="left:1861px;top:131px;width:0;height:0;border-left:4px solid transparent;border-right:4px solid transparent;border-bottom:4px solid #333"></div><div class="abs" style="left:1859px;top:142px;width:13px;height:15px;background:linear-gradient(90deg,#fafafa,#d4d4d4);border:1px solid #b8b8b8;border-radius:2px"></div><div class="abs" style="left:1861px;top:291px;width:0;height:0;border-left:4px solid transparent;border-right:4px solid transparent;border-top:4px solid #333"></div><div class="abs" style="left:1592px;top:302px;width:281px;height:1px;background:#111"></div><div class="t" style="left:1601px;top:303px;font-size:11px;color:#222">2 Ebenen</div><svg class="abs" style="left:1740px;top:303px" width="135" height="16"><circle cx="10" cy="8" r="5" fill="#ddd" stroke="#777"/><path d="M10 8 L10 4 M10 8 L7 10" stroke="#333"/><path d="M33 6 L38 6 M36 4 L38 6 L36 8" stroke="#333" fill="none"/><rect x="40.5" y="4.5" width="7" height="8" fill="#fff" stroke="#555"/><rect x="67.5" y="4.5" width="8" height="9" fill="#fff" stroke="#333"/><rect x="70" y="8" width="5" height="5" fill="#333"/><path d="M98 5 L106 5 L105 14 L99 14 Z" fill="#eee" stroke="#666"/><path d="M97 4 L107 4 M100 3 L104 3" stroke="#666"/><path d="M126 14 L133 7 M129 14 L133 10 M132 14 L133 13" stroke="#999" stroke-dasharray="1 1"/></svg><div class="abs" style="left:1664px;top:504px;width:215px;height:103px;background:#d6d6d6;border:1px solid #333;border-top:none"></div><div class="abs" style="left:1664px;top:504px;width:215px;height:4px;background:#3a3a3a"></div><div class="abs" style="left:1665px;top:508px;width:213px;height:17px;background:linear-gradient(#7e7e7e,#a4a4a4)"></div><div class="abs" style="left:1665px;top:508px;width:64px;height:17px;background:linear-gradient(#8c8c8c,#9c9c9c)"></div><div class="t" style="left:1672px;top:510px;font-size:11px;color:#333">Ausrichten</div><div class="abs" style="left:1729px;top:508px;width:64px;height:17px;background:linear-gradient(#e4e4e4,#d6d6d6)"></div><div class="t" style="left:1736px;top:510px;font-size:11px;color:#333">Pathfinder</div><svg class="abs" style="left:1837px;top:511px" width="38" height="10"><path d="M1 1 L5 5 L1 9 Z M6 1 L10 5 L6 9 Z" fill="#222"/><line x1="18.5" y1="1" x2="18.5" y2="9" stroke="#666"/><path d="M22 3 L27 3 L24.5 6 Z" fill="#222"/><path d="M28 1.5 L37 1.5 M28 4.5 L37 4.5 M28 7.5 L37 7.5" stroke="#333"/></svg><div class="t" style="left:1671px;top:529px;font-size:11px;color:#222">Formmodi:</div><svg class="abs" style="left:1675px;top:543px" width="16" height="17"><rect x="1.5" y="1.5" width="8" height="8" fill="#eee" stroke="#888"/><rect x="5.5" y="5.5" width="9" height="9" fill="#ccc" stroke="#888"/><rect x="6" y="6" width="3.5" height="3.5" fill="#eee"/></svg><svg class="abs" style="left:1705px;top:543px" width="22" height="17"><rect x="2" y="1" width="18" height="15" fill="#dde" stroke="#aab"/><path d="M3.5 10 L3.5 3.5 L11 3.5" fill="none" stroke="#3b3bd8" stroke-width="2.5"/><rect x="8.5" y="6.5" width="9" height="8" fill="#cde" stroke="#8aa"/></svg><svg class="abs" style="left:1740px;top:543px" width="16" height="17"><rect x="1.5" y="1.5" width="9" height="9" fill="#fff" stroke="#555"/><rect x="5.5" y="5.5" width="9" height="9" fill="none" stroke="#555"/><rect x="5.5" y="5.5" width="5" height="5" fill="#111"/></svg><svg class="abs" style="left:1772px;top:543px" width="16" height="17"><rect x="1.5" y="1.5" width="9" height="9" fill="#555" stroke="#333"/><rect x="5.5" y="5.5" width="9" height="9" fill="#222" stroke="#222"/><rect x="5.5" y="5.5" width="5" height="5" fill="#ccc"/></svg><div class="abs" style="left:1800px;top:545px;width:68px;height:17px;background:linear-gradient(#f6f6f6,#e6e6e6);border:1px solid #c4c4c4;border-radius:3px"></div><div class="t" style="left:1808px;top:547px;font-size:11px;color:#a8a8a8">Umwandeln</div><div class="t" style="left:1671px;top:566px;font-size:11px;color:#222">Pathfinder:</div><svg class="abs" style="left:1675px;top:592px" width="160" height="8"><g fill="none" stroke="#777"><circle cx="12" cy="0" r="5"/><circle cx="44" cy="0" r="5"/><circle cx="76" cy="0" r="5"/><circle cx="108" cy="0" r="5"/><circle cx="140" cy="0" r="5"/></g></svg><div class="abs" style="left:1699px;top:537px;width:33px;height:29px;border:4px solid #f0000a;border-radius:2px"></div><div class="abs" style="left:1137px;top:575px;width:781px;height:19px;background:#ffffe1;border:1px solid #767676"></div><div class="t" style="left:1141.50px;top:576px;font-size:12.5px;color:#111;transform:scaleX(0.896);transform-origin:0 0">Vorderes</div><div class="t" style="left:1189.73px;top:576px;font-size:12.5px;color:#111;transform:scaleX(0.969);transform-origin:0 0">Objekt</div><div class="t" style="left:1228.60px;top:576px;font-size:12.5px;color:#111;transform:scaleX(0.912);transform-origin:0 0">abziehen</div><div class="t" style="left:1277.72px;top:576px;font-size:12.5px;color:#111;transform:scaleX(1.081);transform-origin:0 0">(zum</div><div class="t" style="left:1308.00px;top:576px;font-size:12.5px;color:#111;transform:scaleX(0.900);transform-origin:0 0">Erstellen</div><div class="t" style="left:1355.60px;top:576px;font-size:12.5px;color:#111;transform:scaleX(0.861);transform-origin:0 0">einer</div><div class="t" style="left:1384.40px;top:576px;font-size:12.5px;color:#111;transform:scaleX(0.929);transform-origin:0 0">zusammengesetzten</div><div class="t" style="left:1494.25px;top:576px;font-size:12.5px;color:#111;transform:scaleX(0.954);transform-origin:0 0">Form</div><div class="t" style="left:1525.71px;top:576px;font-size:12.5px;color:#111;transform:scaleX(0.995);transform-origin:0 0">und</div><div class="t" style="left:1550.00px;top:576px;font-size:12.5px;color:#111;transform:scaleX(0.983);transform-origin:0 0">zum</div><div class="t" style="left:1575.66px;top:576px;font-size:12.5px;color:#111;transform:scaleX(0.937);transform-origin:0 0">Subtrahieren</div><div class="t" style="left:1646.50px;top:576px;font-size:12.5px;color:#111;transform:scaleX(0.978);transform-origin:0 0">vom</div><div class="t" style="left:1672.45px;top:576px;font-size:12.5px;color:#111;transform:scaleX(0.951);transform-origin:0 0">Formbereich</div><div class="t" style="left:1744.43px;top:576px;font-size:12.5px;color:#111;transform:scaleX(0.873);transform-origin:0 0">bei</div><div class="t" style="left:1762.80px;top:576px;font-size:12.5px;color:#111;transform:scaleX(0.946);transform-origin:0 0">gedrückter</div><div class="t" style="left:1822.30px;top:576px;font-size:12.5px;color:#111;transform:scaleX(0.988);transform-origin:0 0">Alt-Taste</div><div class="t" style="left:1873.05px;top:576px;font-size:12.5px;color:#111;transform:scaleX(0.954);transform-origin:0 0">klicken)</div><div class="abs" style="left:3px;top:88px;width:41px;height:38px;border:5px solid #f0000a;border-radius:2px"></div><div class="abs" style="left:4px;top:244px;width:38px;height:30px;border:5px solid #f0000a;border-radius:2px"></div><div class="abs" style="left:1639px;top:221px;width:219px;height:45px;border:4px solid #f0000a;border-radius:2px"></div><div class="abs" style="left:41px;top:600px;width:14px;height:1px;background:repeating-linear-gradient(90deg,#111 0 1px,transparent 1px 3px)"></div><div class="abs" style="left:1730px;top:89px;width:1px;height:2px;background:#111"></div><div class="abs" style="left:4px;top:1035px;width:1912px;height:1px;background:#333"></div><div class="abs" style="left:1915px;top:36px;width:1px;height:1000px;background:#444"></div><div class="abs" style="left:0;top:1037px;width:1920px;height:1px;background:#f4f4f4"></div><div class="abs" style="left:0;top:1038px;width:1920px;height:2px;background:#4a4a4a"></div><div class="abs" style="left:1917px;top:0;width:1px;height:1040px;background:#f4f4f4"></div><div class="abs" style="left:1918px;top:0;width:2px;height:1040px;background:#3a3a3a"></div></body></html>
